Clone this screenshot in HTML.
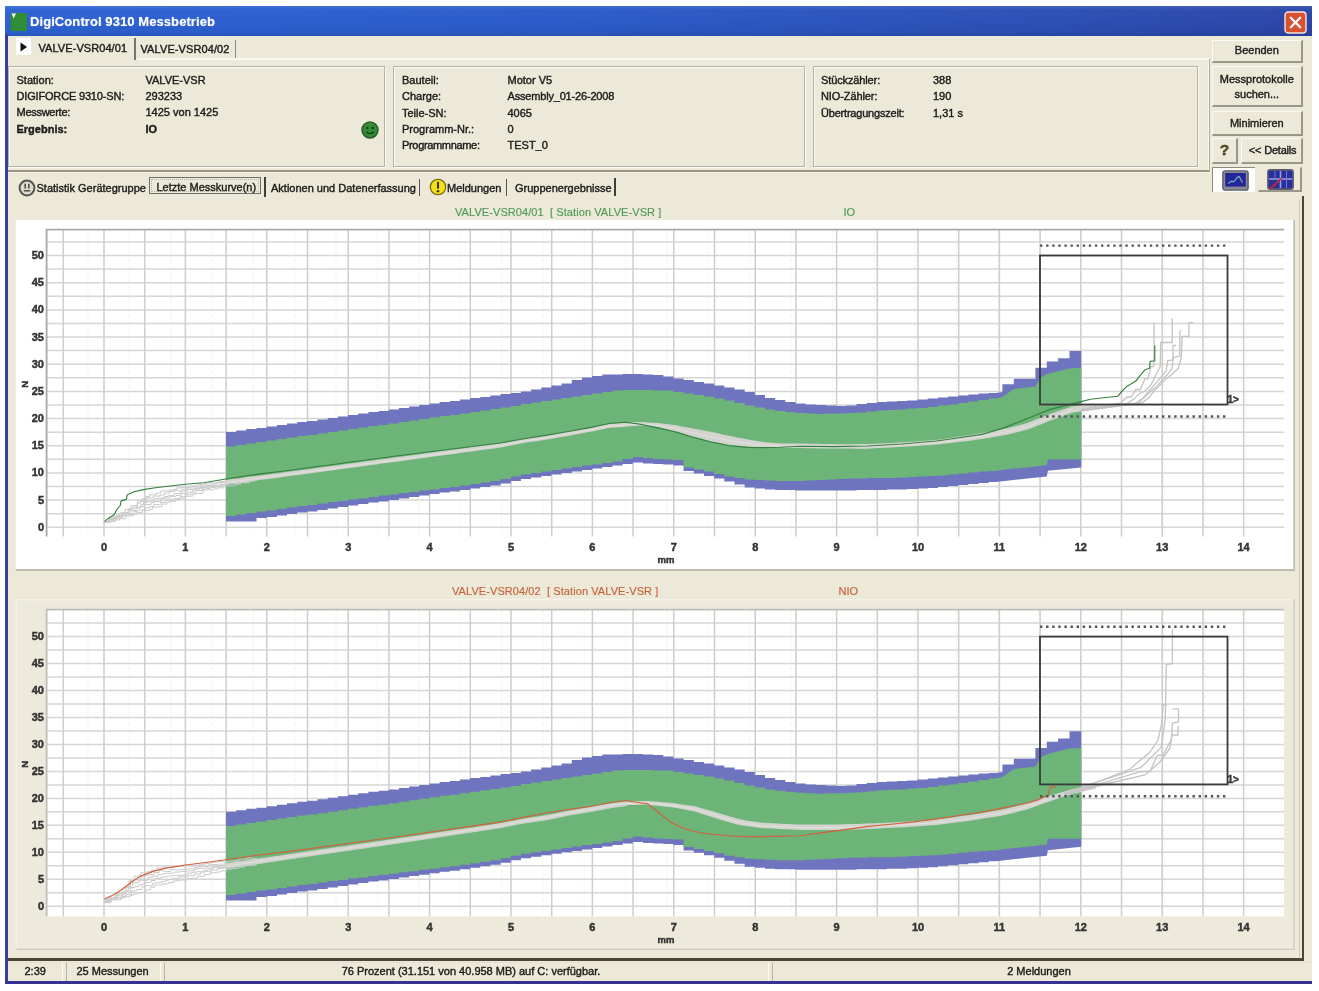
<!DOCTYPE html><html lang="de"><head><meta charset="utf-8"><title>DigiControl 9310 Messbetrieb</title><style>
html,body{margin:0;padding:0;background:#fff;}
#win,body>svg{filter:blur(.6px);}
.t,.btn,.sb{-webkit-text-stroke:.4px currentColor;}
svg text{stroke:currentColor;stroke-width:.4px;}
body{width:1319px;height:991px;overflow:hidden;position:relative;font-family:"Liberation Sans",sans-serif;font-size:11px;color:#1c1c1c;}
.abs{position:absolute;}
#win{position:absolute;left:4.5px;top:6px;width:1307px;height:977.7px;background:#ece9d8;}
#tbar{position:absolute;left:0;top:0;width:100%;height:30.3px;background:linear-gradient(rgba(255,255,255,.10) 0%,rgba(255,255,255,.02) 14%,rgba(0,0,0,0) 50%,rgba(0,0,0,.04) 85%,rgba(0,0,20,.12) 100%),linear-gradient(90deg,#2e62d3 0%,#2c5ccb 40%,#2c50b6 80%,#2c46a8 100%);}
#ttl{position:absolute;left:25.5px;top:7.5px;font-size:13px;font-weight:700;color:#fff;letter-spacing:.08px;white-space:nowrap;text-shadow:0 0 1px #fff8;}
#bl,#bb{position:absolute;background:#38409f;}
#bl{left:.4px;top:28px;width:2.9px;bottom:0;}
#bb{left:.4px;right:0;bottom:0;height:2.5px;background:#373291;}
.t{position:absolute;white-space:nowrap;line-height:13px;}
.b{font-weight:700;}
.btn{position:absolute;box-sizing:border-box;background:#ece9d8;border-top:1.5px solid #fbfaf4;border-left:1.5px solid #fbfaf4;border-right:2px solid #99968a;border-bottom:2px solid #99968a;text-align:center;line-height:13px;white-space:nowrap;}
.grp{position:absolute;box-sizing:border-box;border:1px solid #b5b2a3;box-shadow:1px 1px 0 #fbfaf3, inset 1px 1px 0 #fbfaf3;}
.sb{position:absolute;box-sizing:border-box;top:955.5px;height:19.5px;border-top:1px solid #e4e1d1;border-left:1px solid #b7b4a5;border-right:1px solid #fbfaf4;border-bottom:0;line-height:17px;white-space:nowrap;}
svg text.ax{font-family:"Liberation Sans",sans-serif;font-size:11px;font-weight:700;fill:#3c3c3c;}
svg text.axs{font-family:"Liberation Sans",sans-serif;font-size:8.5px;font-weight:700;fill:#3c3c3c;}
</style></head><body>
<div id="win">
<div id="tbar"></div>
<svg class="abs" style="left:5px;top:6px" width="18" height="20" viewBox="0 0 18 20"><rect x="0.5" y="1" width="16.5" height="18" rx="1.5" fill="#2f8d33"/><path d="M1.5 1.5 L6 1.5 L3.7 6.5 Z" fill="#f4fff0"/></svg>
<div id="ttl">DigiControl 9310 Messbetrieb</div>
<svg class="abs" style="left:1279px;top:4.9px" width="23" height="23" viewBox="0 0 23 23"><rect x="1" y="1" width="21" height="21" rx="3.2" fill="#d9512f" stroke="#f3e6e0" stroke-width="1.4"/><path d="M6.8 6.8 L16.2 16.2 M16.2 6.8 L6.8 16.2" stroke="#fff" stroke-width="2.3" stroke-linecap="round"/></svg>
<div id="bl"></div><div id="bb"></div>
<div class="abs" style="left:11px;top:32px;width:15.5px;height:17px;background:#fff"></div>
<svg class="abs" style="left:15px;top:35.5px" width="8" height="10" viewBox="0 0 8 10"><path d="M0.5 0.5 L7 5 L0.5 9.5 Z" fill="#111"/></svg>
<div class="t " style="left:34.0px;top:35.7px;letter-spacing:.07px">VALVE-VSR04/01</div>
<div class="abs" style="left:129.8px;top:32px;width:1.6px;height:21.5px;background:#77756a"></div>
<div class="t " style="left:136.0px;top:37.3px;letter-spacing:.1px">VALVE-VSR04/02</div>
<div class="abs" style="left:230.5px;top:33.5px;width:1.4px;height:19px;background:#8a887c"></div>
<div class="abs" style="left:132px;top:51.9px;width:1072px;height:1.8px;background:#f9f8f0"></div>
<div class="abs" style="left:1203px;top:54px;width:1.6px;height:111px;background:#f6f4ea"></div>
<div class="abs" style="left:1204.6px;top:53px;width:1.2px;height:112.5px;background:#b3b0a1"></div>
<div class="abs" style="left:3.5px;top:163.8px;width:1201px;height:1.8px;background:#989585"></div>
<div class="abs" style="left:3.5px;top:165.6px;width:1201px;height:1.2px;background:#f6f4ea"></div>
<div class="grp" style="left:3px;top:60.4px;width:377.2px;height:100.3px"></div>
<div class="grp" style="left:388.7px;top:60.4px;width:411.6px;height:100.3px"></div>
<div class="grp" style="left:808.5px;top:60.4px;width:385px;height:100.3px"></div>
<div class="t " style="left:12.0px;top:67.8px;">Station:</div>
<div class="t " style="left:141.0px;top:67.8px;">VALVE-VSR</div>
<div class="t " style="left:12.0px;top:84.1px;letter-spacing:-0.17px">DIGIFORCE 9310-SN:</div>
<div class="t " style="left:141.0px;top:84.1px;">293233</div>
<div class="t " style="left:12.0px;top:100.4px;letter-spacing:-0.27px">Messwerte:</div>
<div class="t " style="left:141.0px;top:100.4px;">1425 von 1425</div>
<div class="t b" style="left:12.0px;top:116.7px;">Ergebnis:</div>
<div class="t b" style="left:141.0px;top:116.7px;">IO</div>
<div class="t " style="left:397.5px;top:68.3px;">Bauteil:</div>
<div class="t " style="left:503.0px;top:68.3px;">Motor V5</div>
<div class="t " style="left:397.5px;top:84.3px;">Charge:</div>
<div class="t " style="left:503.0px;top:84.3px;letter-spacing:-0.18px">Assembly_01-26-2008</div>
<div class="t " style="left:397.5px;top:100.9px;">Teile-SN:</div>
<div class="t " style="left:503.0px;top:100.9px;">4065</div>
<div class="t " style="left:397.5px;top:116.9px;">Programm-Nr.:</div>
<div class="t " style="left:503.0px;top:116.9px;">0</div>
<div class="t " style="left:397.5px;top:132.8px;letter-spacing:-0.33px">Programmname:</div>
<div class="t " style="left:503.0px;top:132.8px;">TEST_0</div>
<div class="t " style="left:816.5px;top:68.3px;letter-spacing:-0.12px">Stückzähler:</div>
<div class="t " style="left:928.5px;top:68.3px;">388</div>
<div class="t " style="left:816.5px;top:84.3px;letter-spacing:-0.1px">NIO-Zähler:</div>
<div class="t " style="left:928.5px;top:84.3px;">190</div>
<div class="t " style="left:816.5px;top:100.9px;letter-spacing:-0.2px">Übertragungszeit:</div>
<div class="t " style="left:928.5px;top:100.9px;">1,31 s</div>
<svg class="abs" style="left:356px;top:114.7px" width="18" height="18" viewBox="0 0 17 17"><circle cx="8.5" cy="8.5" r="7.5" fill="#348c37" stroke="#2c5c30" stroke-width="1.5"/><circle cx="5.9" cy="6.6" r="1.1" fill="#103c14"/><circle cx="11.1" cy="6.6" r="1.1" fill="#103c14"/><path d="M4.8 10 Q8.5 13.8 12.2 10" fill="none" stroke="#103c14" stroke-width="1.2"/></svg>
<div class="btn" style="left:1207.5px;top:33.5px;width:90.7px;height:23.5px;padding-top:3.9px">Beenden</div>
<div class="btn" style="left:1207.5px;top:60px;width:90.7px;height:40.5px;padding-top:4.6px;line-height:15px">Messprotokolle<br>suchen...</div>
<div class="btn" style="left:1207.5px;top:104.5px;width:90.7px;height:25px;padding-top:5.1px">Minimieren</div>
<div class="btn" style="left:1207.5px;top:132px;width:25.5px;height:25.5px"></div>
<svg class="abs" style="left:1213px;top:135.5px" width="13" height="17" viewBox="0 0 13 17"><text x="6.5" y="13" text-anchor="middle" font-family="Liberation Sans,sans-serif" font-size="15.5" font-weight="700" fill="#5c571f" stroke="#45411a" stroke-width=".6">?</text></svg>
<div class="btn" style="left:1236px;top:132px;width:62.2px;height:25.5px;padding-top:5px;padding-left:3px;letter-spacing:-.2px">&lt;&lt; Details</div>
<div class="abs" style="left:1207.5px;top:160.5px;width:42.5px;height:25px;background:#fdfdfb;border-top:1.5px solid #8e8b7c;border-left:1.5px solid #8e8b7c;box-sizing:border-box"></div>
<div class="btn" style="left:1253.5px;top:160.5px;width:44px;height:25px;border-top-color:#ece9d8;border-left-color:#ece9d8"></div>
<svg class="abs" style="left:1217.5px;top:164px" width="27" height="21" viewBox="0 0 27 21"><rect x="0.9" y="0.9" width="25.2" height="19.2" rx="2.2" fill="#8b8b94" stroke="#5a5d68" stroke-width="1.4"/><rect x="3.2" y="3" width="20.6" height="13.6" fill="#25259a"/><path d="M6 13.5 L9.5 11.2 L12 11.6 L15.8 6.8 L17.2 6.6 L20.5 12.5" fill="none" stroke="#6fa3b8" stroke-width="1.4"/></svg>
<svg class="abs" style="left:1262.5px;top:162.5px" width="27" height="21" viewBox="0 0 27 21"><rect x="0.9" y="0.9" width="25.2" height="19.2" rx="2.2" fill="#2b2f9e" stroke="#5d606c" stroke-width="1.6"/><path d="M2 10 H25 M13.5 2 V19" stroke="#9aa2e2" stroke-width="1.5"/><path d="M8 2 V10 M19.5 2 V19" stroke="#6f78cf" stroke-width="1"/><path d="M3 19.5 L8.5 15 L14.5 9.3" stroke="#c22a3a" stroke-width="1.8" fill="none"/></svg>
<svg class="abs" style="left:13.5px;top:172.5px" width="18" height="18" viewBox="0 0 18 18"><circle cx="9" cy="9" r="7.4" fill="#dedcd0" stroke="#555" stroke-width="2"/><path d="M7.2 4.8 V9.4 M10.8 4.8 V9.4" stroke="#444" stroke-width="1.5"/><path d="M5.8 11.8 H12.2" stroke="#444" stroke-width="1.4"/></svg>
<div class="t " style="left:32.0px;top:175.5px;">Statistik Gerätegruppe</div>
<div class="abs" style="left:144.3px;top:170.6px;width:112px;height:17.6px;box-sizing:border-box;border:1px solid #6f6f6a;outline:1px dotted #b9b7ab;outline-offset:-3px"></div>
<div class="t " style="left:152.0px;top:175.0px;">Letzte Messkurve(n)</div>
<div class="abs" style="left:259.5px;top:171px;width:1.8px;height:19.5px;background:#3e3e3c"></div>
<div class="t " style="left:266.5px;top:175.5px;">Aktionen und Datenerfassung</div>
<div class="abs" style="left:414px;top:173px;width:1.5px;height:16.5px;background:#55554f"></div>
<svg class="abs" style="left:424.5px;top:172px" width="18" height="18" viewBox="0 0 18 18"><circle cx="9" cy="9" r="7.7" fill="#f5e21c" stroke="#7a6c0a" stroke-width="1.3"/><path d="M9 3.8 V10.6" stroke="#3a3200" stroke-width="2.1"/><circle cx="9" cy="13.3" r="1.25" fill="#3a3200"/></svg>
<div class="t " style="left:442.5px;top:175.5px;">Meldungen</div>
<div class="abs" style="left:501px;top:173px;width:1.5px;height:16.5px;background:#55554f"></div>
<div class="t " style="left:510.5px;top:175.5px;">Gruppenergebnisse</div>
<div class="abs" style="left:609.5px;top:172px;width:1.8px;height:18px;background:#3e3e3c"></div>
<div class="abs" style="left:1297px;top:190px;width:2.2px;height:764px;background:#4b473c"></div>
<div class="abs" style="left:3.5px;top:951.5px;width:1295.7px;height:3px;background:#4b4636"></div>
<div class="abs" style="left:1294.5px;top:193px;width:1.2px;height:758px;background:#d0cdbf"></div>
<div class="t " style="left:450.5px;top:199.8px;color:#4f9a5a;-webkit-text-stroke:.15px #4f9a5a;letter-spacing:.08px">VALVE-VSR04/01&nbsp;&nbsp;[ Station VALVE-VSR ]</div>
<div class="t " style="left:839.0px;top:199.8px;color:#4f9a5a;-webkit-text-stroke:.15px #4f9a5a">IO</div>
<div class="t " style="left:447.5px;top:579.3px;color:#c5633d;-webkit-text-stroke:.15px #c5633d;letter-spacing:.08px">VALVE-VSR04/02&nbsp;&nbsp;[ Station VALVE-VSR ]</div>
<div class="t " style="left:834.0px;top:579.3px;color:#c5633d;-webkit-text-stroke:.15px #c5633d">NIO</div>
<div class="sb" style="left:5px;width:53px;padding-left:15px;border-left:0">2:39</div>
<div class="sb" style="left:61px;width:95px;padding-left:10px">25 Messungen</div>
<div class="sb" style="left:159px;width:605px;text-align:center;padding-left:10px">76 Prozent (31.151 von 40.958 MB) auf C: verfügbar.</div>
<div class="sb" style="left:767px;width:540px;text-align:center;border-right:0;padding-right:6px">2 Meldungen</div>
</div>
<svg class="abs" style="left:0;top:0" width="1319" height="991" viewBox="0 0 1319 991">
<g transform="translate(0,0)">
<rect x="15.7" y="220" width="1277.8" height="349.3" fill="#fff"/>
<rect x="15.7" y="569.2" width="1279" height="1.6" fill="#b4b1a4"/>
<rect x="1293.4" y="220" width="1.5" height="350.5" fill="#bdbaad"/>
<line x1="46.6" y1="230" x2="46.6" y2="534" stroke="#f9f9ec" stroke-width="1.8" stroke-dasharray="5 2"/><line x1="87.9" y1="230" x2="87.9" y2="534" stroke="#f9f9ec" stroke-width="1.8" stroke-dasharray="5 2"/><line x1="129.3" y1="230" x2="129.3" y2="534" stroke="#f9f9ec" stroke-width="1.8" stroke-dasharray="5 2"/><line x1="170.7" y1="230" x2="170.7" y2="534" stroke="#f9f9ec" stroke-width="1.8" stroke-dasharray="5 2"/><line x1="212.0" y1="230" x2="212.0" y2="534" stroke="#f9f9ec" stroke-width="1.8" stroke-dasharray="5 2"/><line x1="253.4" y1="230" x2="253.4" y2="534" stroke="#f9f9ec" stroke-width="1.8" stroke-dasharray="5 2"/><line x1="294.8" y1="230" x2="294.8" y2="534" stroke="#f9f9ec" stroke-width="1.8" stroke-dasharray="5 2"/><line x1="336.1" y1="230" x2="336.1" y2="534" stroke="#f9f9ec" stroke-width="1.8" stroke-dasharray="5 2"/><line x1="377.5" y1="230" x2="377.5" y2="534" stroke="#f9f9ec" stroke-width="1.8" stroke-dasharray="5 2"/><line x1="418.9" y1="230" x2="418.9" y2="534" stroke="#f9f9ec" stroke-width="1.8" stroke-dasharray="5 2"/><line x1="460.3" y1="230" x2="460.3" y2="534" stroke="#f9f9ec" stroke-width="1.8" stroke-dasharray="5 2"/><line x1="501.6" y1="230" x2="501.6" y2="534" stroke="#f9f9ec" stroke-width="1.8" stroke-dasharray="5 2"/><line x1="543.0" y1="230" x2="543.0" y2="534" stroke="#f9f9ec" stroke-width="1.8" stroke-dasharray="5 2"/><line x1="584.4" y1="230" x2="584.4" y2="534" stroke="#f9f9ec" stroke-width="1.8" stroke-dasharray="5 2"/><line x1="625.7" y1="230" x2="625.7" y2="534" stroke="#f9f9ec" stroke-width="1.8" stroke-dasharray="5 2"/><line x1="667.1" y1="230" x2="667.1" y2="534" stroke="#f9f9ec" stroke-width="1.8" stroke-dasharray="5 2"/><line x1="708.5" y1="230" x2="708.5" y2="534" stroke="#f9f9ec" stroke-width="1.8" stroke-dasharray="5 2"/><line x1="749.8" y1="230" x2="749.8" y2="534" stroke="#f9f9ec" stroke-width="1.8" stroke-dasharray="5 2"/><line x1="791.2" y1="230" x2="791.2" y2="534" stroke="#f9f9ec" stroke-width="1.8" stroke-dasharray="5 2"/><line x1="832.6" y1="230" x2="832.6" y2="534" stroke="#f9f9ec" stroke-width="1.8" stroke-dasharray="5 2"/><line x1="874.0" y1="230" x2="874.0" y2="534" stroke="#f9f9ec" stroke-width="1.8" stroke-dasharray="5 2"/><line x1="915.3" y1="230" x2="915.3" y2="534" stroke="#f9f9ec" stroke-width="1.8" stroke-dasharray="5 2"/><line x1="956.7" y1="230" x2="956.7" y2="534" stroke="#f9f9ec" stroke-width="1.8" stroke-dasharray="5 2"/><line x1="998.1" y1="230" x2="998.1" y2="534" stroke="#f9f9ec" stroke-width="1.8" stroke-dasharray="5 2"/><line x1="1039.4" y1="230" x2="1039.4" y2="534" stroke="#f9f9ec" stroke-width="1.8" stroke-dasharray="5 2"/><line x1="1080.8" y1="230" x2="1080.8" y2="534" stroke="#f9f9ec" stroke-width="1.8" stroke-dasharray="5 2"/><line x1="1122.2" y1="230" x2="1122.2" y2="534" stroke="#f9f9ec" stroke-width="1.8" stroke-dasharray="5 2"/><line x1="1163.5" y1="230" x2="1163.5" y2="534" stroke="#f9f9ec" stroke-width="1.8" stroke-dasharray="5 2"/><line x1="1204.9" y1="230" x2="1204.9" y2="534" stroke="#f9f9ec" stroke-width="1.8" stroke-dasharray="5 2"/><line x1="1246.3" y1="230" x2="1246.3" y2="534" stroke="#f9f9ec" stroke-width="1.8" stroke-dasharray="5 2"/><line x1="46.5" y1="527.3" x2="1284" y2="527.3" stroke="#d6d6d6" stroke-width="1.5"/><line x1="46.5" y1="513.7" x2="1284" y2="513.7" stroke="#d6d6d6" stroke-width="1.5"/><line x1="46.5" y1="500.1" x2="1284" y2="500.1" stroke="#d6d6d6" stroke-width="1.5"/><line x1="46.5" y1="486.5" x2="1284" y2="486.5" stroke="#d6d6d6" stroke-width="1.5"/><line x1="46.5" y1="472.9" x2="1284" y2="472.9" stroke="#d6d6d6" stroke-width="1.5"/><line x1="46.5" y1="459.3" x2="1284" y2="459.3" stroke="#d6d6d6" stroke-width="1.5"/><line x1="46.5" y1="445.8" x2="1284" y2="445.8" stroke="#d6d6d6" stroke-width="1.5"/><line x1="46.5" y1="432.2" x2="1284" y2="432.2" stroke="#d6d6d6" stroke-width="1.5"/><line x1="46.5" y1="418.6" x2="1284" y2="418.6" stroke="#d6d6d6" stroke-width="1.5"/><line x1="46.5" y1="405.0" x2="1284" y2="405.0" stroke="#d6d6d6" stroke-width="1.5"/><line x1="46.5" y1="391.4" x2="1284" y2="391.4" stroke="#d6d6d6" stroke-width="1.5"/><line x1="46.5" y1="377.8" x2="1284" y2="377.8" stroke="#d6d6d6" stroke-width="1.5"/><line x1="46.5" y1="364.2" x2="1284" y2="364.2" stroke="#d6d6d6" stroke-width="1.5"/><line x1="46.5" y1="350.6" x2="1284" y2="350.6" stroke="#d6d6d6" stroke-width="1.5"/><line x1="46.5" y1="337.0" x2="1284" y2="337.0" stroke="#d6d6d6" stroke-width="1.5"/><line x1="46.5" y1="323.4" x2="1284" y2="323.4" stroke="#d6d6d6" stroke-width="1.5"/><line x1="46.5" y1="309.9" x2="1284" y2="309.9" stroke="#d6d6d6" stroke-width="1.5"/><line x1="46.5" y1="296.3" x2="1284" y2="296.3" stroke="#d6d6d6" stroke-width="1.5"/><line x1="46.5" y1="282.7" x2="1284" y2="282.7" stroke="#d6d6d6" stroke-width="1.5"/><line x1="46.5" y1="269.1" x2="1284" y2="269.1" stroke="#d6d6d6" stroke-width="1.5"/><line x1="46.5" y1="255.5" x2="1284" y2="255.5" stroke="#d6d6d6" stroke-width="1.5"/><line x1="46.5" y1="241.9" x2="1284" y2="241.9" stroke="#d6d6d6" stroke-width="1.5"/><line x1="63.3" y1="230" x2="63.3" y2="536.5" stroke="#cdcdcd" stroke-width="1.5"/><line x1="104.0" y1="230" x2="104.0" y2="536.5" stroke="#cdcdcd" stroke-width="1.5"/><line x1="144.7" y1="230" x2="144.7" y2="536.5" stroke="#cdcdcd" stroke-width="1.5"/><line x1="185.4" y1="230" x2="185.4" y2="536.5" stroke="#cdcdcd" stroke-width="1.5"/><line x1="226.1" y1="230" x2="226.1" y2="536.5" stroke="#cdcdcd" stroke-width="1.5"/><line x1="266.8" y1="230" x2="266.8" y2="536.5" stroke="#cdcdcd" stroke-width="1.5"/><line x1="307.5" y1="230" x2="307.5" y2="536.5" stroke="#cdcdcd" stroke-width="1.5"/><line x1="348.2" y1="230" x2="348.2" y2="536.5" stroke="#cdcdcd" stroke-width="1.5"/><line x1="388.9" y1="230" x2="388.9" y2="536.5" stroke="#cdcdcd" stroke-width="1.5"/><line x1="429.6" y1="230" x2="429.6" y2="536.5" stroke="#cdcdcd" stroke-width="1.5"/><line x1="470.3" y1="230" x2="470.3" y2="536.5" stroke="#cdcdcd" stroke-width="1.5"/><line x1="511.0" y1="230" x2="511.0" y2="536.5" stroke="#cdcdcd" stroke-width="1.5"/><line x1="551.7" y1="230" x2="551.7" y2="536.5" stroke="#cdcdcd" stroke-width="1.5"/><line x1="592.4" y1="230" x2="592.4" y2="536.5" stroke="#cdcdcd" stroke-width="1.5"/><line x1="633.1" y1="230" x2="633.1" y2="536.5" stroke="#cdcdcd" stroke-width="1.5"/><line x1="673.8" y1="230" x2="673.8" y2="536.5" stroke="#cdcdcd" stroke-width="1.5"/><line x1="714.5" y1="230" x2="714.5" y2="536.5" stroke="#cdcdcd" stroke-width="1.5"/><line x1="755.2" y1="230" x2="755.2" y2="536.5" stroke="#cdcdcd" stroke-width="1.5"/><line x1="795.9" y1="230" x2="795.9" y2="536.5" stroke="#cdcdcd" stroke-width="1.5"/><line x1="836.6" y1="230" x2="836.6" y2="536.5" stroke="#cdcdcd" stroke-width="1.5"/><line x1="877.3" y1="230" x2="877.3" y2="536.5" stroke="#cdcdcd" stroke-width="1.5"/><line x1="918.0" y1="230" x2="918.0" y2="536.5" stroke="#cdcdcd" stroke-width="1.5"/><line x1="958.7" y1="230" x2="958.7" y2="536.5" stroke="#cdcdcd" stroke-width="1.5"/><line x1="999.4" y1="230" x2="999.4" y2="536.5" stroke="#cdcdcd" stroke-width="1.5"/><line x1="1040.1" y1="230" x2="1040.1" y2="536.5" stroke="#cdcdcd" stroke-width="1.5"/><line x1="1080.8" y1="230" x2="1080.8" y2="536.5" stroke="#cdcdcd" stroke-width="1.5"/><line x1="1121.5" y1="230" x2="1121.5" y2="536.5" stroke="#cdcdcd" stroke-width="1.5"/><line x1="1162.2" y1="230" x2="1162.2" y2="536.5" stroke="#cdcdcd" stroke-width="1.5"/><line x1="1202.9" y1="230" x2="1202.9" y2="536.5" stroke="#cdcdcd" stroke-width="1.5"/><line x1="1243.6" y1="230" x2="1243.6" y2="536.5" stroke="#cdcdcd" stroke-width="1.5"/>
<line x1="46" y1="229.6" x2="1284" y2="229.6" stroke="#a9a9a9" stroke-width="1.8"/>
<line x1="46.6" y1="229" x2="46.6" y2="536.5" stroke="#a9a9a9" stroke-width="1.8"/>
<polygon points="226.0,432.0 236.2,432.0 236.2,430.5 246.3,430.5 246.3,429.0 256.5,429.0 256.5,428.0 266.7,428.0 266.7,426.5 276.9,426.5 276.9,425.0 287.0,425.0 287.0,423.5 297.2,423.5 297.2,422.0 307.4,422.0 307.4,421.0 317.5,421.0 317.5,419.5 327.7,419.5 327.7,418.0 337.9,418.0 337.9,416.5 348.0,416.5 348.0,415.0 358.2,415.0 358.2,413.5 368.4,413.5 368.4,412.0 378.6,412.0 378.6,411.0 388.7,411.0 388.7,409.5 398.9,409.5 398.9,408.0 409.1,408.0 409.1,406.5 419.2,406.5 419.2,405.0 429.4,405.0 429.4,403.5 439.6,403.5 439.6,402.0 449.7,402.0 449.7,401.0 459.9,401.0 459.9,399.5 470.1,399.5 470.1,398.0 480.3,398.0 480.3,397.0 490.4,397.0 490.4,395.5 500.6,395.5 500.6,394.0 510.8,394.0 510.8,393.0 520.9,393.0 520.9,391.5 531.1,391.5 531.1,389.5 541.3,389.5 541.3,387.5 551.4,387.5 551.4,385.5 561.6,385.5 561.6,383.5 571.8,383.5 571.8,380.0 582.0,380.0 582.0,377.5 592.1,377.5 592.1,376.0 602.3,376.0 602.3,374.5 612.5,374.5 612.5,374.5 622.6,374.5 622.6,374.0 632.8,374.0 632.8,374.0 643.0,374.0 643.0,374.5 653.1,374.5 653.1,375.0 663.3,375.0 663.3,376.5 673.5,376.5 673.5,378.5 683.6,378.5 683.6,380.0 693.8,380.0 693.8,382.0 704.0,382.0 704.0,383.5 714.2,383.5 714.2,385.5 724.3,385.5 724.3,387.5 734.5,387.5 734.5,389.5 744.7,389.5 744.7,392.0 754.8,392.0 754.8,395.0 765.0,395.0 765.0,398.0 775.2,398.0 775.2,400.0 785.3,400.0 785.3,402.0 795.5,402.0 795.5,403.5 805.7,403.5 805.7,404.5 815.9,404.5 815.9,405.0 826.0,405.0 826.0,405.5 836.2,405.5 836.2,406.0 846.4,406.0 846.4,405.5 856.5,405.5 856.5,404.0 866.7,404.0 866.7,403.0 876.9,403.0 876.9,402.0 887.0,402.0 887.0,401.5 897.2,401.5 897.2,401.0 907.4,401.0 907.4,400.5 917.6,400.5 917.6,399.5 927.7,399.5 927.7,398.5 937.9,398.5 937.9,397.5 948.1,397.5 948.1,396.5 958.2,396.5 958.2,395.5 968.4,395.5 968.4,394.5 978.6,394.5 978.6,393.5 988.7,393.5 988.7,393.0 996.0,393.0 1002.4,391.9 1002.4,384.3 1013.8,384.3 1013.8,378.7 1035.4,378.7 1035.4,367.7 1046.8,367.7 1046.8,361.6 1058.1,361.6 1058.1,358.2 1069.5,358.2 1069.5,350.9 1081.3,350.9 1081.3,467.4 1047.9,470.8 1046.8,476.5 1025.0,478.7 1004.7,481.0 996.0,482.0 988.7,482.0 988.7,483.0 978.6,483.0 978.6,484.0 968.4,484.0 968.4,485.0 958.2,485.0 958.2,486.0 948.1,486.0 948.1,487.0 937.9,487.0 937.9,488.0 927.7,488.0 927.7,488.5 917.6,488.5 917.6,489.0 907.4,489.0 907.4,489.5 897.2,489.5 897.2,489.5 887.0,489.5 887.0,490.0 876.9,490.0 876.9,490.0 866.7,490.0 866.7,490.0 856.5,490.0 856.5,490.5 846.4,490.5 846.4,490.5 836.2,490.5 836.2,490.5 826.0,490.5 826.0,490.5 815.9,490.5 815.9,490.5 805.7,490.5 805.7,490.5 795.5,490.5 795.5,490.0 785.3,490.0 785.3,490.0 775.2,490.0 775.2,489.5 765.0,489.5 765.0,488.5 754.8,488.5 754.8,487.5 744.7,487.5 744.7,484.5 734.5,484.5 734.5,481.5 724.3,481.5 724.3,478.5 714.2,478.5 714.2,476.0 704.0,476.0 704.0,473.5 693.8,473.5 693.8,471.0 683.6,471.0 683.6,465.5 673.5,465.5 673.5,464.5 663.3,464.5 663.3,464.0 653.1,464.0 653.1,463.5 643.0,463.5 643.0,462.5 632.8,462.5 632.8,464.0 622.6,464.0 622.6,465.5 612.5,465.5 612.5,467.0 602.3,467.0 602.3,468.5 592.1,468.5 592.1,470.0 582.0,470.0 582.0,471.5 571.8,471.5 571.8,473.0 561.6,473.0 561.6,474.5 551.4,474.5 551.4,476.0 541.3,476.0 541.3,477.5 531.1,477.5 531.1,479.0 520.9,479.0 520.9,481.0 510.8,481.0 510.8,483.5 500.6,483.5 500.6,485.5 490.4,485.5 490.4,487.0 480.3,487.0 480.3,488.5 470.1,488.5 470.1,490.0 459.9,490.0 459.9,491.5 449.7,491.5 449.7,492.5 439.6,492.5 439.6,494.0 429.4,494.0 429.4,495.5 419.2,495.5 419.2,497.0 409.1,497.0 409.1,498.5 398.9,498.5 398.9,500.0 388.7,500.0 388.7,501.5 378.6,501.5 378.6,502.5 368.4,502.5 368.4,504.0 358.2,504.0 358.2,505.5 348.0,505.5 348.0,507.0 337.9,507.0 337.9,508.5 327.7,508.5 327.7,510.0 317.5,510.0 317.5,511.5 307.4,511.5 307.4,512.5 297.2,512.5 297.2,514.0 287.0,514.0 287.0,515.5 276.9,515.5 276.9,517.0 266.7,517.0 266.7,518.0 256.5,518.0 256.5,521.5 246.3,521.5 246.3,521.5 236.2,521.5 236.2,521.5 226.0,521.5" fill="#6f74bf"/>
<polygon points="226.0,446.5 236.2,446.5 236.2,445.0 246.3,445.0 246.3,443.5 256.5,443.5 256.5,442.0 266.7,442.0 266.7,440.5 276.9,440.5 276.9,439.0 287.0,439.0 287.0,437.5 297.2,437.5 297.2,436.0 307.4,436.0 307.4,435.0 317.5,435.0 317.5,433.5 327.7,433.5 327.7,432.0 337.9,432.0 337.9,430.5 348.0,430.5 348.0,429.0 358.2,429.0 358.2,427.5 368.4,427.5 368.4,426.0 378.6,426.0 378.6,425.0 388.7,425.0 388.7,423.5 398.9,423.5 398.9,422.0 409.1,422.0 409.1,420.5 419.2,420.5 419.2,419.0 429.4,419.0 429.4,417.5 439.6,417.5 439.6,416.0 449.7,416.0 449.7,415.0 459.9,415.0 459.9,413.5 470.1,413.5 470.1,412.0 480.3,412.0 480.3,410.5 490.4,410.5 490.4,409.0 500.6,409.0 500.6,407.5 510.8,407.5 510.8,406.0 520.9,406.0 520.9,404.0 531.1,404.0 531.1,402.5 541.3,402.5 541.3,401.0 551.4,401.0 551.4,399.5 561.6,399.5 561.6,398.0 571.8,398.0 571.8,396.5 582.0,396.5 582.0,395.0 592.1,395.0 592.1,393.5 602.3,393.5 602.3,392.0 612.5,392.0 612.5,390.5 622.6,390.5 622.6,390.0 632.8,390.0 632.8,390.0 643.0,390.0 643.0,390.0 653.1,390.0 653.1,390.5 663.3,390.5 663.3,390.5 673.5,390.5 673.5,392.0 683.6,392.0 683.6,393.5 693.8,393.5 693.8,395.0 704.0,395.0 704.0,396.5 714.2,396.5 714.2,398.5 724.3,398.5 724.3,400.5 734.5,400.5 734.5,403.0 744.7,403.0 744.7,405.5 754.8,405.5 754.8,407.5 765.0,407.5 765.0,409.5 775.2,409.5 775.2,411.0 785.3,411.0 785.3,412.0 795.5,412.0 795.5,413.0 805.7,413.0 805.7,413.5 815.9,413.5 815.9,414.0 826.0,414.0 826.0,413.5 836.2,413.5 836.2,413.5 846.4,413.5 846.4,413.0 856.5,413.0 856.5,412.5 866.7,412.5 866.7,411.5 876.9,411.5 876.9,410.5 887.0,410.5 887.0,410.0 897.2,410.0 897.2,409.5 907.4,409.5 907.4,408.5 917.6,408.5 917.6,408.0 927.7,408.0 927.7,407.0 937.9,407.0 937.9,405.5 948.1,405.5 948.1,404.5 958.2,404.5 958.2,403.0 968.4,403.0 968.4,401.5 978.6,401.5 978.6,400.0 988.7,400.0 988.7,398.5 996.0,398.5 1002.4,396.9 1013.8,389.0 1035.4,386.6 1041.0,377.5 1046.8,374.1 1069.5,368.4 1081.3,367.7 1081.3,459.4 1047.9,459.4 1046.8,465.1 1027.4,467.4 1004.7,469.6 996.0,471.0 988.7,471.0 988.7,471.5 978.6,471.5 978.6,472.5 968.4,472.5 968.4,473.5 958.2,473.5 958.2,474.5 948.1,474.5 948.1,475.5 937.9,475.5 937.9,476.0 927.7,476.0 927.7,476.5 917.6,476.5 917.6,477.0 907.4,477.0 907.4,477.5 897.2,477.5 897.2,478.0 887.0,478.0 887.0,478.0 876.9,478.0 876.9,478.0 866.7,478.0 866.7,478.5 856.5,478.5 856.5,478.5 846.4,478.5 846.4,479.0 836.2,479.0 836.2,479.5 826.0,479.5 826.0,480.0 815.9,480.0 815.9,480.5 805.7,480.5 805.7,481.0 795.5,481.0 795.5,481.0 785.3,481.0 785.3,481.0 775.2,481.0 775.2,480.5 765.0,480.5 765.0,480.0 754.8,480.0 754.8,479.5 744.7,479.5 744.7,478.0 734.5,478.0 734.5,476.5 724.3,476.5 724.3,474.0 714.2,474.0 714.2,471.5 704.0,471.5 704.0,469.5 693.8,469.5 693.8,467.5 683.6,467.5 683.6,460.0 673.5,460.0 673.5,459.5 663.3,459.5 663.3,459.0 653.1,459.0 653.1,458.0 643.0,458.0 643.0,457.0 632.8,457.0 632.8,459.0 622.6,459.0 622.6,461.5 612.5,461.5 612.5,463.0 602.3,463.0 602.3,464.5 592.1,464.5 592.1,465.5 582.0,465.5 582.0,467.0 571.8,467.0 571.8,468.5 561.6,468.5 561.6,470.0 551.4,470.0 551.4,471.5 541.3,471.5 541.3,473.0 531.1,473.0 531.1,474.5 520.9,474.5 520.9,476.5 510.8,476.5 510.8,479.0 500.6,479.0 500.6,481.0 490.4,481.0 490.4,482.5 480.3,482.5 480.3,484.0 470.1,484.0 470.1,485.5 459.9,485.5 459.9,487.0 449.7,487.0 449.7,488.0 439.6,488.0 439.6,489.5 429.4,489.5 429.4,490.5 419.2,490.5 419.2,492.0 409.1,492.0 409.1,493.0 398.9,493.0 398.9,494.5 388.7,494.5 388.7,495.5 378.6,495.5 378.6,497.0 368.4,497.0 368.4,498.5 358.2,498.5 358.2,499.5 348.0,499.5 348.0,501.0 337.9,501.0 337.9,502.0 327.7,502.0 327.7,503.5 317.5,503.5 317.5,505.0 307.4,505.0 307.4,506.0 297.2,506.0 297.2,507.5 287.0,507.5 287.0,509.0 276.9,509.0 276.9,510.5 266.7,510.5 266.7,511.5 256.5,511.5 256.5,513.0 246.3,513.0 246.3,514.5 236.2,514.5 236.2,516.0 226.0,516.0" fill="#6db478"/>
<polyline points="104.4,522.4 110.8,522.4 110.8,521.5 114.8,521.5 114.8,519.9 119.6,519.9 119.6,518.8 125.8,518.8 125.8,515.9 128.9,515.9 128.9,515.9 133.6,515.9 133.6,514.1 136.6,514.1 136.6,512.7 142.5,512.7 142.5,510.6 149.3,510.6 149.3,509.5 152.4,509.5 152.4,507.2 157.6,507.2 157.6,506.7 162.1,506.7 162.1,504.1 166.8,504.1 166.8,502.2 170.7,502.2 170.7,501.4 175.7,501.4 175.7,499.4 179.6,499.4 179.6,498.1 184.4,498.1 184.4,496.5 187.5,496.5 187.5,496.2 192.7,496.2 192.7,494.2 196.5,494.2 196.5,493.4 202.9,493.4 202.9,490.0 207.2,490.0 207.2,489.9 213.1,489.9 213.1,489.0 217.8,489.0 217.8,487.9 223.5,487.9 223.5,486.0 228.8,486.0 228.8,485.8 235.2,485.8 235.2,484.1 240.5,484.1 240.5,482.4 244.5,482.4 244.5,482.8 249.2,482.8 249.2,481.0 254.4,481.0 254.4,480.8" fill="none" stroke="#cacaca" stroke-width="1"/>
<polyline points="104.4,522.3 109.2,522.3 109.2,520.9 115.3,520.9 115.3,519.0 119.8,519.0 119.8,517.5 123.0,517.5 123.0,515.6 128.8,515.6 128.8,514.5 134.1,514.5 134.1,511.4 137.8,511.4 137.8,510.1 144.8,510.1 144.8,508.0 149.9,508.0 149.9,506.4 153.8,506.4 153.8,504.6 160.7,504.6 160.7,502.4 165.5,502.4 165.5,500.4 170.7,500.4 170.7,499.7 173.7,499.7 173.7,498.5 180.0,498.5 180.0,496.7 185.9,496.7 185.9,494.7 191.0,494.7 191.0,492.8 195.7,492.8 195.7,490.7 202.2,490.7 202.2,489.5 206.0,489.5 206.0,488.5 210.9,488.5 210.9,487.4 215.3,487.4 215.3,486.8 220.8,486.8 220.8,485.8 225.7,485.8 225.7,484.1 229.6,484.1 229.6,483.6 234.9,483.6 234.9,483.6 241.1,483.6 241.1,482.5 247.4,482.5 247.4,480.6 253.7,480.6 253.7,480.1 257.1,480.1 257.1,478.6" fill="none" stroke="#cacaca" stroke-width="1"/>
<polyline points="104.4,522.4 108.4,522.4 108.4,520.0 113.9,520.0 113.9,518.4 117.2,518.4 117.2,516.9 122.3,516.9 122.3,514.8 126.4,514.8 126.4,513.6 131.2,513.6 131.2,510.7 136.1,510.7 136.1,507.9 140.6,507.9 140.6,506.5 144.4,506.5 144.4,504.5 151.0,504.5 151.0,502.7 154.8,502.7 154.8,501.6 161.1,501.6 161.1,498.8 164.2,498.8 164.2,498.1 170.0,498.1 170.0,496.4 175.9,496.4 175.9,495.4 181.0,495.4 181.0,493.3 187.9,493.3 187.9,492.2 193.0,492.2 193.0,490.0 198.6,490.0 198.6,488.8 203.9,488.8 203.9,487.3 209.4,487.3 209.4,485.9 213.6,485.9 213.6,486.5 220.1,486.5 220.1,484.4 226.6,484.4 226.6,483.3 233.3,483.3 233.3,482.8 238.0,482.8 238.0,481.3 241.0,481.3 241.0,481.7 244.2,481.7 244.2,481.1 251.0,481.1 251.0,479.7 254.7,479.7 254.7,479.5" fill="none" stroke="#cacaca" stroke-width="1"/>
<polyline points="104.4,521.9 109.4,521.9 109.4,519.4 113.8,519.4 113.8,517.4 119.5,517.4 119.5,515.4 123.3,515.4 123.3,513.0 129.0,513.0 129.0,510.1 134.0,510.1 134.0,507.4 140.4,507.4 140.4,504.8 143.5,504.8 143.5,502.3 147.8,502.3 147.8,501.3 154.0,501.3 154.0,498.7 157.8,498.7 157.8,498.0 164.2,498.0 164.2,496.5 168.5,496.5 168.5,495.3 174.3,495.3 174.3,493.3 181.2,493.3 181.2,491.2 187.1,491.2 187.1,489.5 190.8,489.5 190.8,489.8 194.7,489.8 194.7,488.7 200.1,488.7 200.1,487.5 204.5,487.5 204.5,485.9 208.7,485.9 208.7,485.9 214.1,485.9 214.1,485.2 220.7,485.2 220.7,482.9 225.9,482.9 225.9,482.0 229.0,482.0 229.0,481.5 235.5,481.5 235.5,481.5 241.8,481.5 241.8,479.9 247.3,479.9 247.3,479.7 251.8,479.7 251.8,478.8 255.7,478.8 255.7,477.5 259.7,477.5 259.7,478.0" fill="none" stroke="#cacaca" stroke-width="1"/>
<polyline points="104.4,521.7 109.2,521.7 109.2,518.7 115.4,518.7 115.4,516.8 118.4,516.8 118.4,515.2 121.8,515.2 121.8,512.7 128.3,512.7 128.3,508.5 132.3,508.5 132.3,507.3 137.0,507.3 137.0,503.2 140.6,503.2 140.6,501.4 146.6,501.4 146.6,497.8 153.3,497.8 153.3,496.1 160.1,496.1 160.1,495.0 164.3,495.0 164.3,492.9 169.2,492.9 169.2,491.6 174.8,491.6 174.8,490.2 177.9,490.2 177.9,490.9 182.1,490.9 182.1,489.4 186.9,489.4 186.9,487.9 190.1,487.9 190.1,488.1 197.0,488.1 197.0,486.9 200.4,486.9 200.4,485.1 205.9,485.1 205.9,485.2 211.1,485.2 211.1,484.0 216.7,484.0 216.7,482.6 221.9,482.6 221.9,481.9 225.9,481.9 225.9,480.9 230.0,480.9 230.0,481.6 234.8,481.6 234.8,480.5 240.4,480.5 240.4,480.1 244.9,480.1 244.9,478.6 249.2,478.6 249.2,478.0 255.6,478.0 255.6,477.9 259.8,477.9 259.8,476.5" fill="none" stroke="#cacaca" stroke-width="1"/>
<polyline points="104.4,520.8 109.8,520.8 109.8,517.8 112.9,517.8 112.9,516.3 116.2,516.3 116.2,515.2 119.4,515.2 119.4,512.9 125.0,512.9 125.0,509.5 131.1,509.5 131.1,505.5 137.6,505.5 137.6,500.7 142.6,500.7 142.6,498.5 145.9,498.5 145.9,496.6 149.6,496.6 149.6,494.8 156.5,494.8 156.5,493.1 160.8,493.1 160.8,491.0 165.9,491.0 165.9,490.9 170.1,490.9 170.1,490.0 173.6,490.0 173.6,489.4 176.8,489.4 176.8,487.9 183.4,487.9 183.4,487.3 190.0,487.3 190.0,486.2 196.0,486.2 196.0,485.0 199.7,485.0 199.7,484.1 203.3,484.1 203.3,483.9 209.0,483.9 209.0,482.4 212.2,482.4 212.2,483.0 218.5,483.0 218.5,481.6 223.6,481.6 223.6,481.3 228.5,481.3 228.5,480.0 232.8,480.0 232.8,479.2 235.9,479.2 235.9,479.4 240.6,479.4 240.6,478.6 243.8,478.6 243.8,477.9 247.4,477.9 247.4,477.1 251.4,477.1 251.4,477.6 256.0,477.6 256.0,476.4" fill="none" stroke="#cacaca" stroke-width="1"/>
<polygon points="226.0,480.0 232.0,479.2 238.0,478.4 244.0,477.6 250.0,476.8 256.0,476.0 262.0,475.3 268.0,474.5 274.0,473.7 280.0,472.9 286.0,472.1 292.0,471.3 298.0,470.5 304.0,469.7 310.0,468.9 316.0,468.1 322.0,467.3 328.0,466.5 334.0,465.7 340.0,464.9 346.0,464.1 352.0,463.2 358.0,462.4 364.0,461.6 370.0,460.8 376.0,460.0 382.0,459.2 388.0,458.4 394.0,457.6 400.0,456.8 406.0,456.0 412.0,455.2 418.0,454.4 424.0,453.6 430.0,452.8 436.0,452.0 442.0,451.1 448.0,450.3 454.0,449.5 460.0,448.7 466.0,447.9 472.0,447.1 478.0,446.3 484.0,445.5 490.0,444.7 496.0,443.9 502.0,443.0 508.0,441.8 514.0,440.6 520.0,439.4 526.0,438.4 532.0,437.5 538.0,436.6 544.0,435.7 550.0,434.7 556.0,433.7 562.0,432.6 568.0,431.6 574.0,430.5 580.0,429.5 586.0,428.4 592.0,427.3 598.0,426.0 604.0,424.8 610.0,423.7 616.0,423.4 622.0,423.0 628.0,422.6 634.0,422.1 640.0,421.9 646.0,422.3 652.0,422.7 658.0,423.1 664.0,423.8 670.0,424.4 676.0,425.2 682.0,426.4 688.0,427.6 694.0,428.7 700.0,429.8 706.0,430.9 712.0,432.0 718.0,433.3 724.0,434.7 730.0,436.0 736.0,437.2 742.0,438.3 748.0,439.5 754.0,440.5 760.0,441.4 766.0,442.3 772.0,442.7 778.0,443.2 784.0,443.4 790.0,443.4 796.0,443.5 802.0,443.6 808.0,443.7 814.0,443.8 820.0,443.9 826.0,444.0 832.0,444.1 838.0,444.2 844.0,444.2 850.0,444.2 856.0,444.1 862.0,444.1 868.0,444.1 874.0,443.8 880.0,443.5 886.0,443.2 892.0,442.9 898.0,442.5 904.0,442.2 910.0,441.8 916.0,441.4 922.0,441.0 928.0,440.6 934.0,440.1 940.0,439.4 946.0,438.5 952.0,437.7 958.0,436.8 964.0,435.9 970.0,435.1 976.0,434.0 982.0,432.9 988.0,431.8 994.0,430.8 1000.0,429.7 1006.0,428.5 1012.0,427.0 1018.0,425.5 1024.0,424.0 1030.0,422.0 1036.0,419.6 1042.0,417.2 1048.0,414.8 1054.0,412.6 1060.0,410.6 1066.0,408.6 1072.0,406.6 1078.0,405.7 1084.0,405.2 1090.0,404.7 1096.0,404.3 1096.0,408.7 1090.0,409.8 1084.0,410.8 1078.0,411.8 1072.0,412.8 1066.0,415.0 1060.0,417.2 1054.0,419.3 1048.0,421.6 1042.0,423.9 1036.0,426.3 1030.0,428.7 1024.0,430.5 1018.0,432.0 1012.0,433.5 1006.0,435.0 1000.0,436.1 994.0,437.0 988.0,437.9 982.0,438.9 976.0,439.8 970.0,440.7 964.0,441.4 958.0,442.1 952.0,442.8 946.0,443.6 940.0,444.3 934.0,444.8 928.0,445.2 922.0,445.6 916.0,446.0 910.0,446.4 904.0,446.7 898.0,447.1 892.0,447.4 886.0,447.7 880.0,448.0 874.0,448.3 868.0,448.7 862.0,448.7 856.0,448.7 850.0,448.6 844.0,448.6 838.0,448.6 832.0,448.6 826.0,448.5 820.0,448.4 814.0,448.3 808.0,448.2 802.0,448.0 796.0,448.0 790.0,447.9 784.0,447.8 778.0,447.6 772.0,447.5 766.0,447.3 760.0,447.1 754.0,446.9 748.0,446.7 742.0,446.1 736.0,445.6 730.0,445.0 724.0,443.8 718.0,442.6 712.0,441.4 706.0,439.9 700.0,438.3 694.0,436.7 688.0,434.9 682.0,433.1 676.0,431.3 670.0,429.9 664.0,428.6 658.0,427.3 652.0,426.6 646.0,426.2 640.0,425.7 634.0,425.9 628.0,426.5 622.0,427.0 616.0,427.4 610.0,427.8 604.0,429.0 598.0,430.2 592.0,431.5 586.0,432.6 580.0,433.7 574.0,434.8 568.0,435.9 562.0,436.9 556.0,437.9 550.0,439.0 544.0,440.0 538.0,440.9 532.0,441.7 526.0,442.6 520.0,443.7 514.0,444.9 508.0,446.1 502.0,447.3 496.0,448.2 490.0,449.0 484.0,449.8 478.0,450.6 472.0,451.4 466.0,452.3 460.0,453.1 454.0,453.9 448.0,454.7 442.0,455.5 436.0,456.3 430.0,457.1 424.0,458.0 418.0,458.8 412.0,459.6 406.0,460.4 400.0,461.2 394.0,462.0 388.0,462.8 382.0,463.6 376.0,464.5 370.0,465.3 364.0,466.1 358.0,466.9 352.0,467.7 346.0,468.5 340.0,469.3 334.0,470.2 328.0,471.0 322.0,471.8 316.0,472.6 310.0,473.4 304.0,474.2 298.0,475.0 292.0,475.8 286.0,476.6 280.0,477.4 274.0,478.2 268.0,479.0 262.0,479.8 256.0,480.6 250.0,481.4 244.0,482.2 238.0,483.0 232.0,483.8 226.0,484.6" fill="#d3d3cf"/>
<polyline points="226.0,482.6 300.0,472.8 400.0,459.3 500.0,445.8 522.7,441.3 545.5,437.9 568.2,434.0 591.0,429.9 609.2,426.1 620.0,425.5 638.2,423.9 656.4,425.2 674.6,428.2 692.8,432.8 711.0,436.8 729.2,440.7 747.4,443.4 765.6,445.1 780.0,445.8 800.0,446.1 834.0,446.7 868.0,446.7 902.0,444.9 936.5,442.6 970.6,438.1 1004.7,432.4 1027.4,426.7 1050.2,417.6 1072.9,409.7" fill="none" stroke="#e4e4e0" stroke-width="0.8"/>
<polyline points="1081.0,409.4 1100.0,405.8 1120.7,403.1 1126.7,397.0 1131.3,397.0 1135.8,389.5 1140.4,389.5 1144.9,378.8 1147.9,378.8 1151.0,366.7 1153.7,366.7 1154.0,351.6 1154.0,322.7" fill="none" stroke="#c3c3c3" stroke-width="1.3"/>
<polyline points="1081.0,410.0 1110.0,405.5 1128.2,403.1 1134.3,398.6 1138.8,394.0 1144.9,391.0 1151.0,384.9 1155.5,375.8 1160.1,366.7 1160.8,342.5 1172.2,342.5 1172.2,318.2" fill="none" stroke="#c3c3c3" stroke-width="1.3"/>
<polyline points="1081.0,410.6 1120.0,405.0 1135.8,403.1 1144.9,397.0 1151.0,391.0 1157.0,386.4 1163.1,378.8 1167.7,374.3 1172.2,368.2 1173.0,357.6 1179.8,356.1 1179.8,331.8 1181.3,330.3" fill="none" stroke="#c3c3c3" stroke-width="1.3"/>
<polyline points="1081.0,411.2 1130.0,404.6 1141.9,403.1 1149.5,397.0 1154.0,391.0 1160.1,384.9 1166.1,378.8 1172.2,374.3 1178.3,368.2 1181.3,357.6 1182.1,336.4 1188.9,336.4 1188.9,322.7 1193.4,322.7" fill="none" stroke="#c3c3c3" stroke-width="1.3"/>
<polyline points="1081.0,410.2 1125.0,405.0 1138.8,403.1 1146.4,394.0 1157.0,381.9 1166.1,371.3 1167.7,360.7 1173.0,359.9 1173.0,345.5 1176.0,345.5" fill="none" stroke="#c3c3c3" stroke-width="1.3"/>
<polyline points="104.4,521.4 108.2,518.4 114.3,514.6 116.5,510.0 120.3,505.5 121.1,500.9 126.4,499.4 127.1,494.9 134.0,491.8 143.1,489.6 153.7,488.0 165.8,486.5 185.5,484.3 203.7,482.7 225.7,479.0 256.8,474.4 290.0,470.3 400.0,455.5 500.0,443.0 522.7,439.0 545.5,435.4 568.2,431.5 591.0,427.4 609.2,423.5 625.0,422.3 638.2,423.9 656.4,427.6 674.6,431.8 692.8,437.2 711.0,442.0 729.2,445.7 747.4,447.4 765.6,447.6 780.0,447.3 800.0,446.2 834.0,446.6 868.0,446.0 902.0,444.0 936.5,441.0 959.2,437.8 982.0,434.4 1004.7,427.6 1027.4,418.5 1050.2,409.4 1072.9,403.7 1081.2,401.6 1090.3,399.3 1117.6,396.3 1122.2,391.0 1126.7,386.4 1135.8,381.1 1140.4,375.1 1144.9,369.8 1149.5,368.2 1150.2,361.4 1154.8,360.7 1154.8,345.5" fill="none" stroke="#35823f" stroke-width="1.15" stroke-linejoin="round"/>
<rect x="1040" y="255.5" width="187.5" height="149.0" fill="none" stroke="#3a3a3a" stroke-width="1.8"/>
<line x1="1040" y1="245.6" x2="1228" y2="245.6" stroke="#555" stroke-width="2.4" stroke-dasharray="2.4 3.7"/>
<line x1="1040" y1="416.5" x2="1228" y2="416.5" stroke="#555" stroke-width="2.4" stroke-dasharray="2.4 3.7"/>
<text x="1227.5" y="403.0" font-size="10" font-weight="700" fill="#444">1&gt;</text>
<text x="44" y="530.8" text-anchor="end" class="ax">0</text>
<text x="44" y="503.6" text-anchor="end" class="ax">5</text>
<text x="44" y="476.4" text-anchor="end" class="ax">10</text>
<text x="44" y="449.3" text-anchor="end" class="ax">15</text>
<text x="44" y="422.1" text-anchor="end" class="ax">20</text>
<text x="44" y="394.9" text-anchor="end" class="ax">25</text>
<text x="44" y="367.7" text-anchor="end" class="ax">30</text>
<text x="44" y="340.5" text-anchor="end" class="ax">35</text>
<text x="44" y="313.4" text-anchor="end" class="ax">40</text>
<text x="44" y="286.2" text-anchor="end" class="ax">45</text>
<text x="44" y="259.0" text-anchor="end" class="ax">50</text>
<text x="104.0" y="551.2" text-anchor="middle" class="ax">0</text>
<text x="185.4" y="551.2" text-anchor="middle" class="ax">1</text>
<text x="266.8" y="551.2" text-anchor="middle" class="ax">2</text>
<text x="348.2" y="551.2" text-anchor="middle" class="ax">3</text>
<text x="429.6" y="551.2" text-anchor="middle" class="ax">4</text>
<text x="511.0" y="551.2" text-anchor="middle" class="ax">5</text>
<text x="592.4" y="551.2" text-anchor="middle" class="ax">6</text>
<text x="673.8" y="551.2" text-anchor="middle" class="ax">7</text>
<text x="755.2" y="551.2" text-anchor="middle" class="ax">8</text>
<text x="836.6" y="551.2" text-anchor="middle" class="ax">9</text>
<text x="918.0" y="551.2" text-anchor="middle" class="ax">10</text>
<text x="999.4" y="551.2" text-anchor="middle" class="ax">11</text>
<text x="1080.8" y="551.2" text-anchor="middle" class="ax">12</text>
<text x="1162.2" y="551.2" text-anchor="middle" class="ax">13</text>
<text x="1243.6" y="551.2" text-anchor="middle" class="ax">14</text>
<text x="666" y="563.3" text-anchor="middle" class="axs" style="font-size:9.5px">mm</text>
<text transform="translate(27.8,384.2) rotate(-90)" text-anchor="middle" font-family="Liberation Sans,sans-serif" font-size="9.5" font-weight="700" fill="#3c3c3c">N</text>
</g>
<g transform="translate(0,380.0)">
<rect x="15.7" y="219.5" width="1277.8" height="349.5" fill="#edeadb"/>
<rect x="15.7" y="219" width="1278" height="1.4" fill="#f6f4ea"/>
<rect x="15.7" y="219" width="1.4" height="350" fill="#f3f1e6"/>
<rect x="15.7" y="568.6" width="1279" height="1.4" fill="#cfccbd"/>
<rect x="1293.4" y="219" width="1.4" height="351" fill="#cfccbd"/>
<rect x="46.5" y="229.2" width="1237.5" height="307.3" fill="#fff"/>
<line x1="46.6" y1="230" x2="46.6" y2="534" stroke="#f9f9ec" stroke-width="1.8" stroke-dasharray="5 2"/><line x1="87.9" y1="230" x2="87.9" y2="534" stroke="#f9f9ec" stroke-width="1.8" stroke-dasharray="5 2"/><line x1="129.3" y1="230" x2="129.3" y2="534" stroke="#f9f9ec" stroke-width="1.8" stroke-dasharray="5 2"/><line x1="170.7" y1="230" x2="170.7" y2="534" stroke="#f9f9ec" stroke-width="1.8" stroke-dasharray="5 2"/><line x1="212.0" y1="230" x2="212.0" y2="534" stroke="#f9f9ec" stroke-width="1.8" stroke-dasharray="5 2"/><line x1="253.4" y1="230" x2="253.4" y2="534" stroke="#f9f9ec" stroke-width="1.8" stroke-dasharray="5 2"/><line x1="294.8" y1="230" x2="294.8" y2="534" stroke="#f9f9ec" stroke-width="1.8" stroke-dasharray="5 2"/><line x1="336.1" y1="230" x2="336.1" y2="534" stroke="#f9f9ec" stroke-width="1.8" stroke-dasharray="5 2"/><line x1="377.5" y1="230" x2="377.5" y2="534" stroke="#f9f9ec" stroke-width="1.8" stroke-dasharray="5 2"/><line x1="418.9" y1="230" x2="418.9" y2="534" stroke="#f9f9ec" stroke-width="1.8" stroke-dasharray="5 2"/><line x1="460.3" y1="230" x2="460.3" y2="534" stroke="#f9f9ec" stroke-width="1.8" stroke-dasharray="5 2"/><line x1="501.6" y1="230" x2="501.6" y2="534" stroke="#f9f9ec" stroke-width="1.8" stroke-dasharray="5 2"/><line x1="543.0" y1="230" x2="543.0" y2="534" stroke="#f9f9ec" stroke-width="1.8" stroke-dasharray="5 2"/><line x1="584.4" y1="230" x2="584.4" y2="534" stroke="#f9f9ec" stroke-width="1.8" stroke-dasharray="5 2"/><line x1="625.7" y1="230" x2="625.7" y2="534" stroke="#f9f9ec" stroke-width="1.8" stroke-dasharray="5 2"/><line x1="667.1" y1="230" x2="667.1" y2="534" stroke="#f9f9ec" stroke-width="1.8" stroke-dasharray="5 2"/><line x1="708.5" y1="230" x2="708.5" y2="534" stroke="#f9f9ec" stroke-width="1.8" stroke-dasharray="5 2"/><line x1="749.8" y1="230" x2="749.8" y2="534" stroke="#f9f9ec" stroke-width="1.8" stroke-dasharray="5 2"/><line x1="791.2" y1="230" x2="791.2" y2="534" stroke="#f9f9ec" stroke-width="1.8" stroke-dasharray="5 2"/><line x1="832.6" y1="230" x2="832.6" y2="534" stroke="#f9f9ec" stroke-width="1.8" stroke-dasharray="5 2"/><line x1="874.0" y1="230" x2="874.0" y2="534" stroke="#f9f9ec" stroke-width="1.8" stroke-dasharray="5 2"/><line x1="915.3" y1="230" x2="915.3" y2="534" stroke="#f9f9ec" stroke-width="1.8" stroke-dasharray="5 2"/><line x1="956.7" y1="230" x2="956.7" y2="534" stroke="#f9f9ec" stroke-width="1.8" stroke-dasharray="5 2"/><line x1="998.1" y1="230" x2="998.1" y2="534" stroke="#f9f9ec" stroke-width="1.8" stroke-dasharray="5 2"/><line x1="1039.4" y1="230" x2="1039.4" y2="534" stroke="#f9f9ec" stroke-width="1.8" stroke-dasharray="5 2"/><line x1="1080.8" y1="230" x2="1080.8" y2="534" stroke="#f9f9ec" stroke-width="1.8" stroke-dasharray="5 2"/><line x1="1122.2" y1="230" x2="1122.2" y2="534" stroke="#f9f9ec" stroke-width="1.8" stroke-dasharray="5 2"/><line x1="1163.5" y1="230" x2="1163.5" y2="534" stroke="#f9f9ec" stroke-width="1.8" stroke-dasharray="5 2"/><line x1="1204.9" y1="230" x2="1204.9" y2="534" stroke="#f9f9ec" stroke-width="1.8" stroke-dasharray="5 2"/><line x1="1246.3" y1="230" x2="1246.3" y2="534" stroke="#f9f9ec" stroke-width="1.8" stroke-dasharray="5 2"/><line x1="46.5" y1="526.2" x2="1284" y2="526.2" stroke="#d6d6d6" stroke-width="1.5"/><line x1="46.5" y1="512.7" x2="1284" y2="512.7" stroke="#d6d6d6" stroke-width="1.5"/><line x1="46.5" y1="499.2" x2="1284" y2="499.2" stroke="#d6d6d6" stroke-width="1.5"/><line x1="46.5" y1="485.8" x2="1284" y2="485.8" stroke="#d6d6d6" stroke-width="1.5"/><line x1="46.5" y1="472.3" x2="1284" y2="472.3" stroke="#d6d6d6" stroke-width="1.5"/><line x1="46.5" y1="458.8" x2="1284" y2="458.8" stroke="#d6d6d6" stroke-width="1.5"/><line x1="46.5" y1="445.3" x2="1284" y2="445.3" stroke="#d6d6d6" stroke-width="1.5"/><line x1="46.5" y1="431.8" x2="1284" y2="431.8" stroke="#d6d6d6" stroke-width="1.5"/><line x1="46.5" y1="418.4" x2="1284" y2="418.4" stroke="#d6d6d6" stroke-width="1.5"/><line x1="46.5" y1="404.9" x2="1284" y2="404.9" stroke="#d6d6d6" stroke-width="1.5"/><line x1="46.5" y1="391.4" x2="1284" y2="391.4" stroke="#d6d6d6" stroke-width="1.5"/><line x1="46.5" y1="377.9" x2="1284" y2="377.9" stroke="#d6d6d6" stroke-width="1.5"/><line x1="46.5" y1="364.4" x2="1284" y2="364.4" stroke="#d6d6d6" stroke-width="1.5"/><line x1="46.5" y1="351.0" x2="1284" y2="351.0" stroke="#d6d6d6" stroke-width="1.5"/><line x1="46.5" y1="337.5" x2="1284" y2="337.5" stroke="#d6d6d6" stroke-width="1.5"/><line x1="46.5" y1="324.0" x2="1284" y2="324.0" stroke="#d6d6d6" stroke-width="1.5"/><line x1="46.5" y1="310.5" x2="1284" y2="310.5" stroke="#d6d6d6" stroke-width="1.5"/><line x1="46.5" y1="297.0" x2="1284" y2="297.0" stroke="#d6d6d6" stroke-width="1.5"/><line x1="46.5" y1="283.6" x2="1284" y2="283.6" stroke="#d6d6d6" stroke-width="1.5"/><line x1="46.5" y1="270.1" x2="1284" y2="270.1" stroke="#d6d6d6" stroke-width="1.5"/><line x1="46.5" y1="256.6" x2="1284" y2="256.6" stroke="#d6d6d6" stroke-width="1.5"/><line x1="46.5" y1="243.1" x2="1284" y2="243.1" stroke="#d6d6d6" stroke-width="1.5"/><line x1="63.3" y1="230" x2="63.3" y2="536.5" stroke="#cdcdcd" stroke-width="1.5"/><line x1="104.0" y1="230" x2="104.0" y2="536.5" stroke="#cdcdcd" stroke-width="1.5"/><line x1="144.7" y1="230" x2="144.7" y2="536.5" stroke="#cdcdcd" stroke-width="1.5"/><line x1="185.4" y1="230" x2="185.4" y2="536.5" stroke="#cdcdcd" stroke-width="1.5"/><line x1="226.1" y1="230" x2="226.1" y2="536.5" stroke="#cdcdcd" stroke-width="1.5"/><line x1="266.8" y1="230" x2="266.8" y2="536.5" stroke="#cdcdcd" stroke-width="1.5"/><line x1="307.5" y1="230" x2="307.5" y2="536.5" stroke="#cdcdcd" stroke-width="1.5"/><line x1="348.2" y1="230" x2="348.2" y2="536.5" stroke="#cdcdcd" stroke-width="1.5"/><line x1="388.9" y1="230" x2="388.9" y2="536.5" stroke="#cdcdcd" stroke-width="1.5"/><line x1="429.6" y1="230" x2="429.6" y2="536.5" stroke="#cdcdcd" stroke-width="1.5"/><line x1="470.3" y1="230" x2="470.3" y2="536.5" stroke="#cdcdcd" stroke-width="1.5"/><line x1="511.0" y1="230" x2="511.0" y2="536.5" stroke="#cdcdcd" stroke-width="1.5"/><line x1="551.7" y1="230" x2="551.7" y2="536.5" stroke="#cdcdcd" stroke-width="1.5"/><line x1="592.4" y1="230" x2="592.4" y2="536.5" stroke="#cdcdcd" stroke-width="1.5"/><line x1="633.1" y1="230" x2="633.1" y2="536.5" stroke="#cdcdcd" stroke-width="1.5"/><line x1="673.8" y1="230" x2="673.8" y2="536.5" stroke="#cdcdcd" stroke-width="1.5"/><line x1="714.5" y1="230" x2="714.5" y2="536.5" stroke="#cdcdcd" stroke-width="1.5"/><line x1="755.2" y1="230" x2="755.2" y2="536.5" stroke="#cdcdcd" stroke-width="1.5"/><line x1="795.9" y1="230" x2="795.9" y2="536.5" stroke="#cdcdcd" stroke-width="1.5"/><line x1="836.6" y1="230" x2="836.6" y2="536.5" stroke="#cdcdcd" stroke-width="1.5"/><line x1="877.3" y1="230" x2="877.3" y2="536.5" stroke="#cdcdcd" stroke-width="1.5"/><line x1="918.0" y1="230" x2="918.0" y2="536.5" stroke="#cdcdcd" stroke-width="1.5"/><line x1="958.7" y1="230" x2="958.7" y2="536.5" stroke="#cdcdcd" stroke-width="1.5"/><line x1="999.4" y1="230" x2="999.4" y2="536.5" stroke="#cdcdcd" stroke-width="1.5"/><line x1="1040.1" y1="230" x2="1040.1" y2="536.5" stroke="#cdcdcd" stroke-width="1.5"/><line x1="1080.8" y1="230" x2="1080.8" y2="536.5" stroke="#cdcdcd" stroke-width="1.5"/><line x1="1121.5" y1="230" x2="1121.5" y2="536.5" stroke="#cdcdcd" stroke-width="1.5"/><line x1="1162.2" y1="230" x2="1162.2" y2="536.5" stroke="#cdcdcd" stroke-width="1.5"/><line x1="1202.9" y1="230" x2="1202.9" y2="536.5" stroke="#cdcdcd" stroke-width="1.5"/><line x1="1243.6" y1="230" x2="1243.6" y2="536.5" stroke="#cdcdcd" stroke-width="1.5"/>
<line x1="46" y1="229.6" x2="1284" y2="229.6" stroke="#bdbdbd" stroke-width="1.8"/>
<line x1="46.6" y1="229" x2="46.6" y2="536.5" stroke="#bdbdbd" stroke-width="1.8"/>
<polygon points="226.0,431.7 236.2,431.7 236.2,430.2 246.3,430.2 246.3,428.7 256.5,428.7 256.5,427.7 266.7,427.7 266.7,426.2 276.9,426.2 276.9,424.7 287.0,424.7 287.0,423.2 297.2,423.2 297.2,421.8 307.4,421.8 307.4,420.8 317.5,420.8 317.5,419.3 327.7,419.3 327.7,417.8 337.9,417.8 337.9,416.3 348.0,416.3 348.0,414.8 358.2,414.8 358.2,413.3 368.4,413.3 368.4,411.8 378.6,411.8 378.6,410.8 388.7,410.8 388.7,409.4 398.9,409.4 398.9,407.9 409.1,407.9 409.1,406.4 419.2,406.4 419.2,404.9 429.4,404.9 429.4,403.4 439.6,403.4 439.6,401.9 449.7,401.9 449.7,400.9 459.9,400.9 459.9,399.4 470.1,399.4 470.1,397.9 480.3,397.9 480.3,397.0 490.4,397.0 490.4,395.5 500.6,395.5 500.6,394.0 510.8,394.0 510.8,393.0 520.9,393.0 520.9,391.5 531.1,391.5 531.1,389.5 541.3,389.5 541.3,387.5 551.4,387.5 551.4,385.5 561.6,385.5 561.6,383.6 571.8,383.6 571.8,380.1 582.0,380.1 582.0,377.6 592.1,377.6 592.1,376.1 602.3,376.1 602.3,374.6 612.5,374.6 612.5,374.6 622.6,374.6 622.6,374.1 632.8,374.1 632.8,374.1 643.0,374.1 643.0,374.6 653.1,374.6 653.1,375.1 663.3,375.1 663.3,376.6 673.5,376.6 673.5,378.6 683.6,378.6 683.6,380.1 693.8,380.1 693.8,382.1 704.0,382.1 704.0,383.6 714.2,383.6 714.2,385.5 724.3,385.5 724.3,387.5 734.5,387.5 734.5,389.5 744.7,389.5 744.7,392.0 754.8,392.0 754.8,395.0 765.0,395.0 765.0,397.9 775.2,397.9 775.2,399.9 785.3,399.9 785.3,401.9 795.5,401.9 795.5,403.4 805.7,403.4 805.7,404.4 815.9,404.4 815.9,404.9 826.0,404.9 826.0,405.4 836.2,405.4 836.2,405.9 846.4,405.9 846.4,405.4 856.5,405.4 856.5,403.9 866.7,403.9 866.7,402.9 876.9,402.9 876.9,401.9 887.0,401.9 887.0,401.4 897.2,401.4 897.2,400.9 907.4,400.9 907.4,400.4 917.6,400.4 917.6,399.4 927.7,399.4 927.7,398.4 937.9,398.4 937.9,397.5 948.1,397.5 948.1,396.5 958.2,396.5 958.2,395.5 968.4,395.5 968.4,394.5 978.6,394.5 978.6,393.5 988.7,393.5 988.7,393.0 996.0,393.0 1002.4,391.9 1002.4,384.4 1013.8,384.4 1013.8,378.8 1035.4,378.8 1035.4,367.9 1046.8,367.9 1046.8,361.8 1058.1,361.8 1058.1,358.5 1069.5,358.5 1069.5,351.2 1081.3,351.2 1081.3,466.8 1047.9,470.2 1046.8,475.8 1025.0,478.0 1004.7,480.3 996.0,481.3 988.7,481.3 988.7,482.3 978.6,482.3 978.6,483.3 968.4,483.3 968.4,484.2 958.2,484.2 958.2,485.2 948.1,485.2 948.1,486.2 937.9,486.2 937.9,487.2 927.7,487.2 927.7,487.7 917.6,487.7 917.6,488.2 907.4,488.2 907.4,488.7 897.2,488.7 897.2,488.7 887.0,488.7 887.0,489.2 876.9,489.2 876.9,489.2 866.7,489.2 866.7,489.2 856.5,489.2 856.5,489.7 846.4,489.7 846.4,489.7 836.2,489.7 836.2,489.7 826.0,489.7 826.0,489.7 815.9,489.7 815.9,489.7 805.7,489.7 805.7,489.7 795.5,489.7 795.5,489.2 785.3,489.2 785.3,489.2 775.2,489.2 775.2,488.7 765.0,488.7 765.0,487.7 754.8,487.7 754.8,486.7 744.7,486.7 744.7,483.7 734.5,483.7 734.5,480.8 724.3,480.8 724.3,477.8 714.2,477.8 714.2,475.3 704.0,475.3 704.0,472.8 693.8,472.8 693.8,470.4 683.6,470.4 683.6,464.9 673.5,464.9 673.5,463.9 663.3,463.9 663.3,463.4 653.1,463.4 653.1,462.9 643.0,462.9 643.0,461.9 632.8,461.9 632.8,463.4 622.6,463.4 622.6,464.9 612.5,464.9 612.5,466.4 602.3,466.4 602.3,467.9 592.1,467.9 592.1,469.4 582.0,469.4 582.0,470.9 571.8,470.9 571.8,472.3 561.6,472.3 561.6,473.8 551.4,473.8 551.4,475.3 541.3,475.3 541.3,476.8 531.1,476.8 531.1,478.3 520.9,478.3 520.9,480.3 510.8,480.3 510.8,482.8 500.6,482.8 500.6,484.7 490.4,484.7 490.4,486.2 480.3,486.2 480.3,487.7 470.1,487.7 470.1,489.2 459.9,489.2 459.9,490.7 449.7,490.7 449.7,491.7 439.6,491.7 439.6,493.2 429.4,493.2 429.4,494.7 419.2,494.7 419.2,496.1 409.1,496.1 409.1,497.6 398.9,497.6 398.9,499.1 388.7,499.1 388.7,500.6 378.6,500.6 378.6,501.6 368.4,501.6 368.4,503.1 358.2,503.1 358.2,504.6 348.0,504.6 348.0,506.1 337.9,506.1 337.9,507.6 327.7,507.6 327.7,509.0 317.5,509.0 317.5,510.5 307.4,510.5 307.4,511.5 297.2,511.5 297.2,513.0 287.0,513.0 287.0,514.5 276.9,514.5 276.9,516.0 266.7,516.0 266.7,517.0 256.5,517.0 256.5,520.4 246.3,520.4 246.3,520.4 236.2,520.4 236.2,520.4 226.0,520.4" fill="#6f74bf"/>
<polygon points="226.0,446.1 236.2,446.1 236.2,444.6 246.3,444.6 246.3,443.1 256.5,443.1 256.5,441.6 266.7,441.6 266.7,440.1 276.9,440.1 276.9,438.6 287.0,438.6 287.0,437.1 297.2,437.1 297.2,435.6 307.4,435.6 307.4,434.6 317.5,434.6 317.5,433.2 327.7,433.2 327.7,431.7 337.9,431.7 337.9,430.2 348.0,430.2 348.0,428.7 358.2,428.7 358.2,427.2 368.4,427.2 368.4,425.7 378.6,425.7 378.6,424.7 388.7,424.7 388.7,423.2 398.9,423.2 398.9,421.8 409.1,421.8 409.1,420.3 419.2,420.3 419.2,418.8 429.4,418.8 429.4,417.3 439.6,417.3 439.6,415.8 449.7,415.8 449.7,414.8 459.9,414.8 459.9,413.3 470.1,413.3 470.1,411.8 480.3,411.8 480.3,410.3 490.4,410.3 490.4,408.9 500.6,408.9 500.6,407.4 510.8,407.4 510.8,405.9 520.9,405.9 520.9,403.9 531.1,403.9 531.1,402.4 541.3,402.4 541.3,400.9 551.4,400.9 551.4,399.4 561.6,399.4 561.6,397.9 571.8,397.9 571.8,396.5 582.0,396.5 582.0,395.0 592.1,395.0 592.1,393.5 602.3,393.5 602.3,392.0 612.5,392.0 612.5,390.5 622.6,390.5 622.6,390.0 632.8,390.0 632.8,390.0 643.0,390.0 643.0,390.0 653.1,390.0 653.1,390.5 663.3,390.5 663.3,390.5 673.5,390.5 673.5,392.0 683.6,392.0 683.6,393.5 693.8,393.5 693.8,395.0 704.0,395.0 704.0,396.5 714.2,396.5 714.2,398.4 724.3,398.4 724.3,400.4 734.5,400.4 734.5,402.9 744.7,402.9 744.7,405.4 754.8,405.4 754.8,407.4 765.0,407.4 765.0,409.4 775.2,409.4 775.2,410.8 785.3,410.8 785.3,411.8 795.5,411.8 795.5,412.8 805.7,412.8 805.7,413.3 815.9,413.3 815.9,413.8 826.0,413.8 826.0,413.3 836.2,413.3 836.2,413.3 846.4,413.3 846.4,412.8 856.5,412.8 856.5,412.3 866.7,412.3 866.7,411.3 876.9,411.3 876.9,410.3 887.0,410.3 887.0,409.8 897.2,409.8 897.2,409.4 907.4,409.4 907.4,408.4 917.6,408.4 917.6,407.9 927.7,407.9 927.7,406.9 937.9,406.9 937.9,405.4 948.1,405.4 948.1,404.4 958.2,404.4 958.2,402.9 968.4,402.9 968.4,401.4 978.6,401.4 978.6,399.9 988.7,399.9 988.7,398.4 996.0,398.4 1002.4,396.9 1013.8,389.0 1035.4,386.6 1041.0,377.6 1046.8,374.2 1069.5,368.6 1081.3,367.9 1081.3,458.8 1047.9,458.8 1046.8,464.5 1027.4,466.8 1004.7,469.0 996.0,470.4 988.7,470.4 988.7,470.9 978.6,470.9 978.6,471.8 968.4,471.8 968.4,472.8 958.2,472.8 958.2,473.8 948.1,473.8 948.1,474.8 937.9,474.8 937.9,475.3 927.7,475.3 927.7,475.8 917.6,475.8 917.6,476.3 907.4,476.3 907.4,476.8 897.2,476.8 897.2,477.3 887.0,477.3 887.0,477.3 876.9,477.3 876.9,477.3 866.7,477.3 866.7,477.8 856.5,477.8 856.5,477.8 846.4,477.8 846.4,478.3 836.2,478.3 836.2,478.8 826.0,478.8 826.0,479.3 815.9,479.3 815.9,479.8 805.7,479.8 805.7,480.3 795.5,480.3 795.5,480.3 785.3,480.3 785.3,480.3 775.2,480.3 775.2,479.8 765.0,479.8 765.0,479.3 754.8,479.3 754.8,478.8 744.7,478.8 744.7,477.3 734.5,477.3 734.5,475.8 724.3,475.8 724.3,473.3 714.2,473.3 714.2,470.9 704.0,470.9 704.0,468.9 693.8,468.9 693.8,466.9 683.6,466.9 683.6,459.4 673.5,459.4 673.5,458.9 663.3,458.9 663.3,458.5 653.1,458.5 653.1,457.5 643.0,457.5 643.0,456.5 632.8,456.5 632.8,458.5 622.6,458.5 622.6,460.9 612.5,460.9 612.5,462.4 602.3,462.4 602.3,463.9 592.1,463.9 592.1,464.9 582.0,464.9 582.0,466.4 571.8,466.4 571.8,467.9 561.6,467.9 561.6,469.4 551.4,469.4 551.4,470.9 541.3,470.9 541.3,472.3 531.1,472.3 531.1,473.8 520.9,473.8 520.9,475.8 510.8,475.8 510.8,478.3 500.6,478.3 500.6,480.3 490.4,480.3 490.4,481.8 480.3,481.8 480.3,483.3 470.1,483.3 470.1,484.7 459.9,484.7 459.9,486.2 449.7,486.2 449.7,487.2 439.6,487.2 439.6,488.7 429.4,488.7 429.4,489.7 419.2,489.7 419.2,491.2 409.1,491.2 409.1,492.2 398.9,492.2 398.9,493.7 388.7,493.7 388.7,494.7 378.6,494.7 378.6,496.1 368.4,496.1 368.4,497.6 358.2,497.6 358.2,498.6 348.0,498.6 348.0,500.1 337.9,500.1 337.9,501.1 327.7,501.1 327.7,502.6 317.5,502.6 317.5,504.1 307.4,504.1 307.4,505.1 297.2,505.1 297.2,506.6 287.0,506.6 287.0,508.0 276.9,508.0 276.9,509.5 266.7,509.5 266.7,510.5 256.5,510.5 256.5,512.0 246.3,512.0 246.3,513.5 236.2,513.5 236.2,515.0 226.0,515.0" fill="#6db478"/>
<polyline points="104.4,522.6 111.2,522.6 111.2,519.6 114.5,519.6 114.5,519.9 120.5,519.9 120.5,518.1 124.7,518.1 124.7,516.7 130.1,516.7 130.1,515.1 133.8,515.1 133.8,513.8 138.3,513.8 138.3,512.5 145.3,512.5 145.3,510.0 150.5,510.0 150.5,507.2 154.6,507.2 154.6,505.1 157.7,505.1 157.7,505.0 162.0,505.0 162.0,503.8 168.5,503.8 168.5,502.4 173.8,502.4 173.8,500.9 176.9,500.9 176.9,500.4 180.4,500.4 180.4,500.0 187.4,500.0 187.4,498.8 191.1,498.8 191.1,498.1 197.3,498.1 197.3,496.3 203.9,496.3 203.9,494.6 210.1,494.6 210.1,492.7 217.0,492.7 217.0,492.0 220.7,492.0 220.7,490.9 226.5,490.9 226.5,489.3 231.7,489.3 231.7,488.4 238.4,488.4 238.4,487.1 244.7,487.1 244.7,485.7 251.2,485.7 251.2,485.2 256.1,485.2 256.1,483.8" fill="none" stroke="#cacaca" stroke-width="1"/>
<polyline points="104.4,521.8 109.3,521.8 109.3,519.6 113.6,519.6 113.6,518.9 117.3,518.9 117.3,518.1 121.4,518.1 121.4,516.5 125.6,516.5 125.6,514.7 131.4,514.7 131.4,510.9 136.5,510.9 136.5,509.5 141.9,509.5 141.9,506.9 145.7,506.9 145.7,505.7 152.4,505.7 152.4,503.3 155.7,503.3 155.7,502.6 161.6,502.6 161.6,501.4 165.4,501.4 165.4,500.3 168.6,500.3 168.6,499.5 172.7,499.5 172.7,498.2 179.2,498.2 179.2,496.9 184.3,496.9 184.3,497.1 188.3,497.1 188.3,495.3 194.8,495.3 194.8,494.1 200.7,494.1 200.7,492.2 205.1,492.2 205.1,491.4 210.8,491.4 210.8,490.2 217.7,490.2 217.7,488.7 223.6,488.7 223.6,487.6 227.6,487.6 227.6,487.9 231.2,487.9 231.2,486.4 237.0,486.4 237.0,485.7 240.2,485.7 240.2,486.0 243.8,486.0 243.8,484.0 248.1,484.0 248.1,484.0 254.1,484.0 254.1,482.3 258.5,482.3 258.5,481.4" fill="none" stroke="#cacaca" stroke-width="1"/>
<polyline points="104.4,521.4 110.4,521.4 110.4,519.4 116.4,519.4 116.4,517.2 122.2,517.2 122.2,513.7 126.1,513.7 126.1,511.8 130.4,511.8 130.4,507.4 135.2,507.4 135.2,506.7 138.7,506.7 138.7,504.9 143.2,504.9 143.2,503.2 146.8,503.2 146.8,502.5 150.9,502.5 150.9,500.5 155.5,500.5 155.5,498.2 160.8,498.2 160.8,497.2 164.0,497.2 164.0,496.5 167.6,496.5 167.6,495.9 173.2,495.9 173.2,495.6 180.1,495.6 180.1,495.2 187.1,495.2 187.1,493.1 191.9,493.1 191.9,492.2 197.2,492.2 197.2,491.6 203.4,491.6 203.4,490.4 207.5,490.4 207.5,489.3 212.6,489.3 212.6,487.8 215.7,487.8 215.7,487.8 219.2,487.8 219.2,487.6 223.1,487.6 223.1,486.0 226.8,486.0 226.8,485.5 230.7,485.5 230.7,485.3 235.6,485.3 235.6,484.3 241.1,484.3 241.1,483.2 247.8,483.2 247.8,483.2 253.7,483.2 253.7,481.5 258.7,481.5 258.7,480.9" fill="none" stroke="#cacaca" stroke-width="1"/>
<polyline points="104.4,520.4 109.5,520.4 109.5,518.0 112.9,518.0 112.9,517.4 117.3,517.4 117.3,515.1 124.0,515.1 124.0,510.9 128.2,510.9 128.2,508.0 132.7,508.0 132.7,502.6 138.4,502.6 138.4,500.8 142.6,500.8 142.6,500.3 148.3,500.3 148.3,497.2 153.1,497.2 153.1,496.1 158.1,496.1 158.1,494.4 163.4,494.4 163.4,493.4 167.6,493.4 167.6,493.2 174.3,493.2 174.3,492.0 180.3,492.0 180.3,491.4 185.6,491.4 185.6,491.0 190.5,491.0 190.5,490.7 195.1,490.7 195.1,489.0 198.5,489.0 198.5,488.3 204.9,488.3 204.9,488.0 211.8,488.0 211.8,486.9 214.9,486.9 214.9,486.4 221.0,486.4 221.0,485.5 226.0,485.5 226.0,484.2 230.8,484.2 230.8,484.1 234.9,484.1 234.9,483.1 239.8,483.1 239.8,483.0 246.0,483.0 246.0,482.0 252.4,482.0 252.4,480.2 256.3,480.2 256.3,479.9" fill="none" stroke="#cacaca" stroke-width="1"/>
<polyline points="104.4,519.9 110.1,519.9 110.1,517.9 115.5,517.9 115.5,515.3 118.8,515.3 118.8,512.5 125.8,512.5 125.8,506.8 130.5,506.8 130.5,500.3 133.8,500.3 133.8,499.8 140.8,499.8 140.8,497.1 144.3,497.1 144.3,495.4 148.2,495.4 148.2,494.7 154.0,494.7 154.0,492.5 159.1,492.5 159.1,490.7 164.2,490.7 164.2,491.4 170.2,491.4 170.2,489.5 175.3,489.5 175.3,489.9 179.3,489.9 179.3,489.7 184.2,489.7 184.2,489.0 188.8,489.0 188.8,488.8 194.9,488.8 194.9,487.3 198.5,487.3 198.5,486.6 201.6,486.6 201.6,486.3 208.2,486.3 208.2,484.8 213.2,484.8 213.2,484.5 217.8,484.5 217.8,484.1 224.6,484.1 224.6,483.1 229.5,483.1 229.5,482.9 233.8,482.9 233.8,482.0 239.4,482.0 239.4,481.3 245.8,481.3 245.8,479.7 251.3,479.7 251.3,479.2 257.0,479.2 257.0,479.3" fill="none" stroke="#cacaca" stroke-width="1"/>
<polyline points="104.4,518.8 109.3,518.8 109.3,517.3 115.8,517.3 115.8,513.8 122.1,513.8 122.1,507.8 128.8,507.8 128.8,500.9 134.3,500.9 134.3,496.0 140.8,496.0 140.8,492.8 147.1,492.8 147.1,491.7 150.9,491.7 150.9,490.5 156.2,490.5 156.2,488.1 162.4,488.1 162.4,487.2 167.9,487.2 167.9,487.2 171.9,487.2 171.9,487.1 176.7,487.1 176.7,486.2 183.6,486.2 183.6,485.5 186.6,485.5 186.6,485.8 193.0,485.8 193.0,485.3 199.0,485.3 199.0,484.3 204.7,484.3 204.7,483.4 208.8,483.4 208.8,483.1 211.9,483.1 211.9,482.1 217.9,482.1 217.9,481.5 223.9,481.5 223.9,481.6 228.5,481.6 228.5,480.9 234.7,480.9 234.7,480.5 238.2,480.5 238.2,479.1 242.7,479.1 242.7,479.0 246.9,479.0 246.9,477.8 252.1,477.8 252.1,478.6 256.6,478.6 256.6,477.5" fill="none" stroke="#cacaca" stroke-width="1"/>
<polygon points="226.0,483.4 232.0,482.5 238.0,481.6 244.0,480.7 250.0,479.9 256.0,479.0 262.0,478.1 268.0,477.2 274.0,476.3 280.0,475.4 286.0,474.5 292.0,473.7 298.0,472.8 304.0,471.9 310.0,471.0 316.0,470.2 322.0,469.3 328.0,468.4 334.0,467.6 340.0,466.7 346.0,465.9 352.0,465.0 358.0,464.1 364.0,463.3 370.0,462.4 376.0,461.5 382.0,460.7 388.0,459.8 394.0,458.9 400.0,458.1 406.0,457.2 412.0,456.3 418.0,455.4 424.0,454.5 430.0,453.6 436.0,452.7 442.0,451.8 448.0,450.9 454.0,450.0 460.0,449.2 466.0,448.3 472.0,447.4 478.0,446.5 484.0,445.6 490.0,444.7 496.0,443.8 502.0,442.8 508.0,441.6 514.0,440.4 520.0,439.2 526.0,438.2 532.0,437.3 538.0,436.5 544.0,435.6 550.0,434.4 556.0,433.2 562.0,432.0 568.0,430.8 574.0,429.8 580.0,428.8 586.0,427.7 592.0,426.7 598.0,425.6 604.0,424.6 610.0,423.6 616.0,422.7 622.0,421.9 628.0,421.3 634.0,421.2 640.0,421.1 646.0,420.9 652.0,421.3 658.0,421.8 664.0,422.3 670.0,422.8 676.0,423.6 682.0,424.4 688.0,425.2 694.0,426.1 700.0,427.8 706.0,429.4 712.0,431.1 718.0,432.9 724.0,434.7 730.0,436.5 736.0,438.3 742.0,439.7 748.0,440.7 754.0,441.6 760.0,442.6 766.0,443.1 772.0,443.3 778.0,443.6 784.0,443.9 790.0,444.1 796.0,444.4 802.0,444.6 808.0,444.6 814.0,444.6 820.0,444.6 826.0,444.6 832.0,444.6 838.0,444.5 844.0,444.3 850.0,444.1 856.0,444.0 862.0,443.8 868.0,443.6 874.0,443.3 880.0,443.0 886.0,442.7 892.0,442.4 898.0,442.1 904.0,441.8 910.0,441.4 916.0,441.0 922.0,440.6 928.0,440.2 934.0,439.7 940.0,439.1 946.0,438.3 952.0,437.5 958.0,436.6 964.0,435.8 970.0,435.0 976.0,434.0 982.0,433.0 988.0,431.9 994.0,430.9 1000.0,429.9 1006.0,428.8 1012.0,427.3 1018.0,425.8 1024.0,424.3 1030.0,422.6 1036.0,420.5 1042.0,418.4 1048.0,416.3 1054.0,414.4 1060.0,412.7 1066.0,411.0 1072.0,409.3 1078.0,408.1 1084.0,407.0 1090.0,405.9 1096.0,404.8 1096.0,408.8 1090.0,410.1 1084.0,411.4 1078.0,412.7 1072.0,414.1 1066.0,416.0 1060.0,417.9 1054.0,419.9 1048.0,421.9 1042.0,424.0 1036.0,426.2 1030.0,428.4 1024.0,430.2 1018.0,431.7 1012.0,433.2 1006.0,434.7 1000.0,435.9 994.0,436.9 988.0,437.8 982.0,438.8 976.0,439.8 970.0,440.8 964.0,441.5 958.0,442.3 952.0,443.0 946.0,443.8 940.0,444.6 934.0,445.2 928.0,445.6 922.0,446.0 916.0,446.4 910.0,446.8 904.0,447.2 898.0,447.5 892.0,447.8 886.0,448.1 880.0,448.4 874.0,448.7 868.0,449.0 862.0,449.2 856.0,449.4 850.0,449.5 844.0,449.7 838.0,449.9 832.0,450.0 826.0,450.0 820.0,450.0 814.0,450.0 808.0,450.0 802.0,450.0 796.0,449.8 790.0,449.5 784.0,449.3 778.0,449.0 772.0,448.6 766.0,448.3 760.0,447.9 754.0,447.1 748.0,446.3 742.0,445.4 736.0,444.2 730.0,442.5 724.0,440.7 718.0,438.9 712.0,437.1 706.0,435.2 700.0,433.3 694.0,431.3 688.0,430.2 682.0,429.1 676.0,428.1 670.0,427.1 664.0,426.4 658.0,425.8 652.0,425.2 646.0,424.7 640.0,424.8 634.0,424.9 628.0,425.1 622.0,425.9 616.0,426.7 610.0,427.8 604.0,428.9 598.0,430.0 592.0,431.1 586.0,432.2 580.0,433.2 574.0,434.2 568.0,435.3 562.0,436.5 556.0,437.7 550.0,438.9 544.0,440.1 538.0,441.0 532.0,441.9 526.0,442.8 520.0,443.8 514.0,445.0 508.0,446.2 502.0,447.4 496.0,448.4 490.0,449.3 484.0,450.2 478.0,451.1 472.0,452.0 466.0,452.9 460.0,453.8 454.0,454.8 448.0,455.7 442.0,456.6 436.0,457.5 430.0,458.4 424.0,459.3 418.0,460.2 412.0,461.1 406.0,462.0 400.0,462.9 394.0,463.8 388.0,464.7 382.0,465.5 376.0,466.4 370.0,467.3 364.0,468.2 358.0,469.0 352.0,469.9 346.0,470.8 340.0,471.7 334.0,472.6 328.0,473.4 322.0,474.3 316.0,475.2 310.0,476.1 304.0,476.9 298.0,477.8 292.0,478.7 286.0,479.6 280.0,480.5 274.0,481.4 268.0,482.3 262.0,483.2 256.0,484.1 250.0,485.0 244.0,485.9 238.0,486.8 232.0,487.7 226.0,488.6" fill="#d3d3cf"/>
<polyline points="226.0,486.3 300.0,475.3 400.0,460.8 500.0,445.8 522.7,441.3 545.5,437.9 568.2,433.3 591.0,429.4 613.7,425.3 627.4,423.5 647.8,423.1 670.6,425.3 693.3,428.8 716.0,435.6 738.8,442.4 761.5,445.8 800.0,447.6 834.0,447.6 868.0,446.6 902.0,444.9 936.5,442.6 970.6,438.1 1004.7,432.4 1027.4,426.7 1050.2,418.6 1072.9,411.7" fill="none" stroke="#e4e4e0" stroke-width="0.8"/>
<polyline points="226.0,488.2 300.0,477.2 400.0,462.7 500.0,447.7 522.7,443.2 545.5,439.8 568.2,435.2 591.0,431.3 613.7,427.2 627.4,425.4" fill="none" stroke="#c9d3c9" stroke-width="1.2"/>
<polyline points="1064.0,414.0 1080.6,407.6 1141.1,387.4 1161.3,367.3 1165.3,339.0 1166.3,284.5 1172.4,283.5 1172.4,249.2" fill="none" stroke="#c3c3c3" stroke-width="1.3"/>
<polyline points="1064.0,414.6 1084.0,408.6 1100.7,403.6 1141.1,391.5 1150.0,391.5 1157.3,375.3 1163.0,375.3 1171.4,359.2 1172.4,343.0 1178.5,342.0 1178.5,328.9 1172.4,328.9" fill="none" stroke="#c3c3c3" stroke-width="1.3"/>
<polyline points="1064.0,415.2 1086.0,409.2 1110.0,403.0 1145.0,395.0 1160.0,382.0 1170.0,368.0 1172.0,355.0 1178.0,355.0 1178.0,346.0" fill="none" stroke="#c3c3c3" stroke-width="1.3"/>
<polyline points="1064.0,413.6 1090.0,405.0 1130.0,389.0 1150.0,372.0 1158.0,360.0 1162.0,342.0 1163.0,325.0 1167.0,325.0" fill="none" stroke="#c3c3c3" stroke-width="1.3"/>
<polyline points="104.4,519.1 114.3,514.6 123.4,508.5 130.9,502.5 140.0,496.4 153.7,491.1 165.8,488.1 185.5,485.0 203.7,482.7 225.7,479.7 256.8,475.2 290.0,471.4 400.0,456.5 500.0,442.1 522.7,437.6 545.5,433.0 568.2,429.6 591.0,426.2 609.2,422.8 625.1,420.5 636.5,422.3 647.8,423.9 659.2,433.0 670.6,442.1 682.0,447.8 693.3,451.2 704.7,453.5 727.4,455.8 750.2,456.9 772.9,456.4 800.0,455.8 822.7,452.6 845.5,449.6 868.2,446.4 891.0,444.2 913.7,441.9 936.5,438.9 959.2,435.5 982.0,432.1 1004.7,427.6 1027.4,423.0 1038.8,419.6 1047.9,415.0 1050.3,407.6 1056.0,406.6" fill="none" stroke="#d2603a" stroke-width="1.15" stroke-linejoin="round"/>
<rect x="1040" y="256.6" width="187.5" height="147.8" fill="none" stroke="#3a3a3a" stroke-width="1.8"/>
<line x1="1040" y1="246.8" x2="1228" y2="246.8" stroke="#555" stroke-width="2.4" stroke-dasharray="2.4 3.7"/>
<line x1="1040" y1="416.3" x2="1228" y2="416.3" stroke="#555" stroke-width="2.4" stroke-dasharray="2.4 3.7"/>
<text x="1227.5" y="402.9" font-size="10" font-weight="700" fill="#444">1&gt;</text>
<text x="44" y="529.7" text-anchor="end" class="ax">0</text>
<text x="44" y="502.7" text-anchor="end" class="ax">5</text>
<text x="44" y="475.8" text-anchor="end" class="ax">10</text>
<text x="44" y="448.8" text-anchor="end" class="ax">15</text>
<text x="44" y="421.9" text-anchor="end" class="ax">20</text>
<text x="44" y="394.9" text-anchor="end" class="ax">25</text>
<text x="44" y="367.9" text-anchor="end" class="ax">30</text>
<text x="44" y="341.0" text-anchor="end" class="ax">35</text>
<text x="44" y="314.0" text-anchor="end" class="ax">40</text>
<text x="44" y="287.1" text-anchor="end" class="ax">45</text>
<text x="44" y="260.1" text-anchor="end" class="ax">50</text>
<text x="104.0" y="551.2" text-anchor="middle" class="ax">0</text>
<text x="185.4" y="551.2" text-anchor="middle" class="ax">1</text>
<text x="266.8" y="551.2" text-anchor="middle" class="ax">2</text>
<text x="348.2" y="551.2" text-anchor="middle" class="ax">3</text>
<text x="429.6" y="551.2" text-anchor="middle" class="ax">4</text>
<text x="511.0" y="551.2" text-anchor="middle" class="ax">5</text>
<text x="592.4" y="551.2" text-anchor="middle" class="ax">6</text>
<text x="673.8" y="551.2" text-anchor="middle" class="ax">7</text>
<text x="755.2" y="551.2" text-anchor="middle" class="ax">8</text>
<text x="836.6" y="551.2" text-anchor="middle" class="ax">9</text>
<text x="918.0" y="551.2" text-anchor="middle" class="ax">10</text>
<text x="999.4" y="551.2" text-anchor="middle" class="ax">11</text>
<text x="1080.8" y="551.2" text-anchor="middle" class="ax">12</text>
<text x="1162.2" y="551.2" text-anchor="middle" class="ax">13</text>
<text x="1243.6" y="551.2" text-anchor="middle" class="ax">14</text>
<text x="666" y="563.3" text-anchor="middle" class="axs" style="font-size:9.5px">mm</text>
<text transform="translate(27.8,384.2) rotate(-90)" text-anchor="middle" font-family="Liberation Sans,sans-serif" font-size="9.5" font-weight="700" fill="#3c3c3c">N</text>
</g>
</svg>
</body></html>
